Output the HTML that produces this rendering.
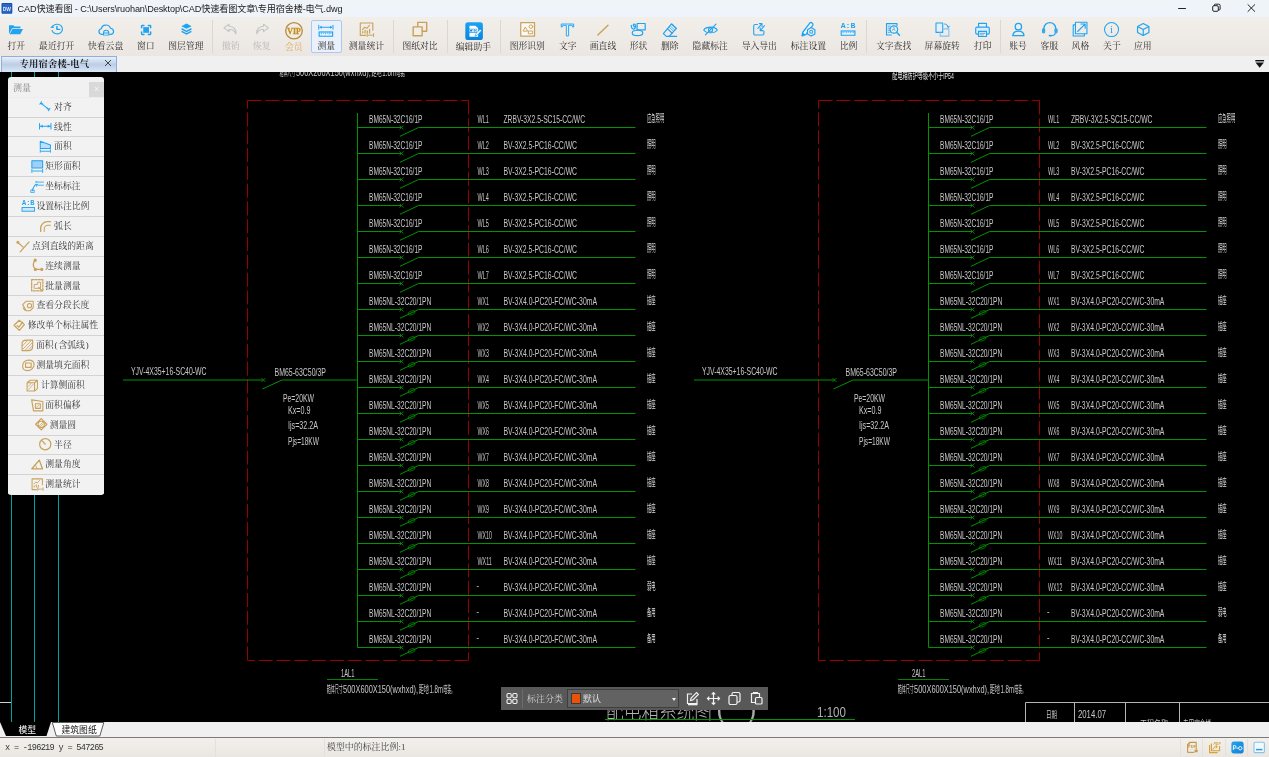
<!DOCTYPE html>
<html lang="zh-CN">
<head>
<meta charset="utf-8">
<title>CAD快速看图</title>
<style>
html,body{margin:0;padding:0;}
#root{position:absolute;left:0;top:0;width:1269px;height:757px;will-change:transform;}
body{width:1269px;height:757px;overflow:hidden;position:relative;background:linear-gradient(#f0f0f0,#f0f0f1);font-family:"Liberation Serif","Noto Serif CJK SC",serif;}
#title{position:absolute;left:0;top:0;width:1269px;height:17px;background:linear-gradient(#eff4f9,#eff4fa);}
#title .app{position:absolute;left:1px;top:3px;width:11.800px;height:10.800px;}
#title .tt{position:absolute;left:17.500px;top:0.700px;height:17px;line-height:17px;font-family:"Liberation Sans","Noto Sans CJK SC",sans-serif;font-size:9.15px;color:#1c1c1c;white-space:nowrap;letter-spacing:-0.12px;}
#title svg.wc{position:absolute;top:0;left:1170px;}
#toolbar{position:absolute;left:0;top:17px;width:1269px;height:39px;background:linear-gradient(#f2efeb,#ebe6e1);}
.lb{position:absolute;width:80px;top:23.600px;text-align:center;font-size:8.800px;line-height:11px;color:#2e2e2e;white-space:nowrap;}
.lb.dis{color:#b9b9b9;}
.lb.vip{color:#d9ad5a;top:24.800px;}
.lb.low{top:24.800px;}
.sep{position:absolute;top:3px;height:33px;width:1px;background:linear-gradient(#dcd7d1,#dcd7d2);}
.selbox{position:absolute;top:3px;width:28.6px;height:31px;border:1px solid #a9c9f2;background:linear-gradient(#eaf1fb,#eaf1fc);border-radius:2px;}
#tabs{position:absolute;left:0;top:56px;width:1269px;height:16px;background:linear-gradient(#f0f0f0,#f0f0f1);}
#tab1{position:absolute;left:1px;top:0;width:115.500px;height:16px;border:1px solid #8fb0dc;border-bottom:none;box-sizing:border-box;background:linear-gradient(#e9f0f9 0%,#bccfe8 48%,#c2d3eb 62%,#dbe6f4 100%);}
#tab1 span{position:absolute;left:17.500px;top:1.5px;font-size:9.3px;line-height:11px;font-weight:bold;color:#222;white-space:nowrap;letter-spacing:0.2px;}
#tab1 svg{position:absolute;left:102px;top:2.400px;}
#tabdd{position:absolute;left:1253px;top:59px;}
#panel{position:absolute;left:7.500px;top:77px;width:96.700px;height:418px;background:linear-gradient(#f1f1f1,#f1f1f2);border-radius:3px;overflow:hidden;}
#panel .hd{position:absolute;left:5.500px;top:6px;font-size:9px;line-height:11px;color:#8a8a8a;}
#panel .cl{position:absolute;left:81.600px;top:5px;width:15.200px;height:14.600px;background:linear-gradient(#d9d9d9,#d9d9da);color:#f4f4f4;font-size:9px;line-height:15px;text-align:center;font-family:"Liberation Sans",sans-serif;}
.prow{position:absolute;left:0;width:96.700px;height:19.875px;box-sizing:border-box;border-top:1px solid #d3d3d3;background:linear-gradient(#f2f2f2,#f2f2f3);font-size:8.8px;line-height:19px;color:#383838;text-align:center;white-space:nowrap;padding-right:1.600px;}
.prow i{display:inline-block;width:0.550em;font-style:normal;text-align:center;}
.prow .pi{display:inline-block;width:14.500px;height:14.500px;vertical-align:-4.200px;margin-right:1.200px;line-height:0;}
.prow .pi svg{width:14.500px;height:14.500px;}
.prow.first{border-top-color:#ececec;}
#float{position:absolute;left:501px;top:687px;width:267px;height:23px;background:linear-gradient(#585858,#585859);}
#float .g{position:absolute;left:5px;top:5px;}
#float .s{position:absolute;left:21px;top:2px;width:1px;height:19px;background:linear-gradient(#6c6c6c,#6c6c6d);}
#float .t{position:absolute;left:26px;top:5.5px;font-size:9px;line-height:12px;color:#d2d2d2;white-space:nowrap;}
#float .dd{position:absolute;left:66px;top:2px;width:112px;height:19px;box-sizing:border-box;border:1px solid #3e3e3e;background:linear-gradient(#626262,#626263);}
#float .dd i{position:absolute;left:2.500px;top:3px;width:10.500px;height:10.500px;background:linear-gradient(#ea5208,#ea5209);border:0.700px solid #3a3a3a;box-sizing:border-box;}
#float .dd span{position:absolute;left:15px;top:2.5px;font-size:9px;line-height:12px;color:#f2f2f2;}
#float .dd b{position:absolute;left:103.500px;top:7.500px;width:0;height:0;border:2.800px solid transparent;border-top:3.600px solid #f4f4f4;}
#float svg.fi{position:absolute;top:4px;}
#btabs{position:absolute;left:0;top:722px;width:1269px;height:15px;background:linear-gradient(#f0f0f0,#f0f0f1);}
#status{position:absolute;left:0;top:737px;width:1269px;height:20px;background:linear-gradient(#f3f0ec,#eae6e2);border-top:1px solid #7a7a7a;box-sizing:border-box;}
#status .xy{position:absolute;left:5px;top:5.300px;font-family:"Liberation Mono",monospace;font-size:8.600px;line-height:11px;color:#333;white-space:pre;letter-spacing:-0.700px;}
#status .sc{position:absolute;left:327px;top:4.300px;font-size:8.900px;letter-spacing:0.050px;line-height:11px;color:#444;white-space:nowrap;}
#status .vs{position:absolute;top:1px;width:1px;height:18px;background:linear-gradient(#e4e0db,#e4e0dc);}
#status svg.si{position:absolute;top:2px;}
</style>
</head>
<body>
<div id="root">
<div id="title">
<svg class="app" viewBox="0 0 11 11"><rect width="11" height="11" rx="1" fill="#1d4fa3"/><rect x="1" y="1" width="9" height="9" fill="#2b67c4"/><text x="5.500" y="8" font-size="5" text-anchor="middle" fill="#dfe9fa" font-family='"Liberation Sans",sans-serif' font-weight="bold">DW</text></svg>
<div class="tt">CAD快速看图 - C:\Users\ruohan\Desktop\CAD快速看图文章\专用宿舍楼-电气.dwg</div>
<svg class="wc" width="99" height="17" viewBox="0 0 99 17"><g fill="none" stroke="#222" stroke-width="1"><path d="M8.200 8.500h7.700"/><rect x="42.700" y="5.700" width="5.600" height="5.600" rx="1.200"/><path d="M44.300 5.700V5.200a1 1 0 0 1 1-1h3.500a1.300 1.300 0 0 1 1.300 1.300v3.500a1 1 0 0 1-1 1h-.800"/><path d="M77.700 4.400l7.300 7.300M85 4.400l-7.300 7.300"/></g></svg>
</div>
<div id="toolbar">
<svg width="17.81" height="17.95" preserveAspectRatio="none" style="position:absolute;left:7.12px;top:2.79px" viewBox="0 0 18 18"><path d="M2 5.2h4.4l1.2 1.3h6v1.7H5.2L2 14z" fill="#20a4f2"/><path d="M5.6 9h10.6l-2.8 5.2H2.6z" fill="#20a4f2"/></svg>
<span class="lb " style="left:-23.7px">打开</span>
<svg width="17.86" height="16.03" preserveAspectRatio="none" style="position:absolute;left:47.77px;top:4.33px" viewBox="0 0 18 18"><g fill="none" stroke="#20a4f2" stroke-width="1.2" stroke-linecap="round" stroke-linejoin="round" ><path d="M4.6 6.2A5.4 5.4 0 1 1 4 10.6"/><path d="M9 6.2v3.3h2.8" stroke-width="1.5"/></g><path d="M2.2 7.6l2.6-2.8l1.2 3.2z" fill="#20a4f2"/></svg>
<span class="lb " style="left:16.7px">最近打开</span>
<svg width="18.29" height="16.98" preserveAspectRatio="none" style="position:absolute;left:96.73px;top:3.58px" viewBox="0 0 18 18"><g fill="none" stroke="#20a4f2" stroke-width="1.2" stroke-linecap="round" stroke-linejoin="round" ><path d="M5.600 14.200H4.600a3 3 0 0 1-.400-5.900a4.600 4.600 0 0 1 9-.600a3.300 3.300 0 0 1 .600 6.500H12.600"/><path d="M6.400 15v-2.600a2.600 2.600 0 0 1 5.200 0V15zM6.400 12.800h5.200" stroke-width="1"/></g></svg>
<span class="lb " style="left:65.6px">快看云盘</span>
<svg width="16.24" height="15.93" preserveAspectRatio="none" style="position:absolute;left:137.78px;top:4.63px" viewBox="0 0 18 18"><rect x="5.800" y="5.800" width="6.400" height="6.400" fill="#20a4f2"/><path d="M4 6.600V4.600a.600.600 0 0 1 .600-.600h2M11.400 4h2a.600.600 0 0 1 .600.600v2M14 11.400v2a.600.600 0 0 1-.600.600h-2M6.600 14h-2a.600.600 0 0 1-.600-.600v-2" fill="none" stroke="#20a4f2" stroke-width="1.700" stroke-linecap="round"/></svg>
<span class="lb " style="left:105.7px">窗口</span>
<svg width="17.02" height="17.72" preserveAspectRatio="none" style="position:absolute;left:177.69px;top:3.43px" viewBox="0 0 18 18"><path d="M9 3.6l5.4 2.7L9 9L3.6 6.3z" fill="#20a4f2"/><path d="M3.8 8.9L9 11.5l5.2-2.6M3.8 11.5L9 14.1l5.2-2.6" fill="none" stroke="#20a4f2" stroke-width="1.5"/></svg>
<span class="lb " style="left:145.9px">图层管理</span>
<i class="sep" style="left:212.0px"></i>
<svg width="18.82" height="16.72" preserveAspectRatio="none" style="position:absolute;left:221.35px;top:4.45px" viewBox="0 0 18 18"><g fill="none" stroke="#c4c4c4" stroke-width="1.1" stroke-linecap="round" stroke-linejoin="round" ><path d="M7.6 3.4L2.8 7.4l4.8 4V9.2c3.4-.2 5.6 1 6.6 4.6c.6-5-2-8-6.6-8.2z"/></g></svg>
<span class="lb dis" style="left:190.7px">撤销</span>
<svg width="18.25" height="16.72" preserveAspectRatio="none" style="position:absolute;left:252.83px;top:4.45px" viewBox="0 0 18 18"><g fill="none" stroke="#c4c4c4" stroke-width="1.1" stroke-linecap="round" stroke-linejoin="round" ><path d="M10.4 3.4l4.8 4l-4.8 4V9.2c-3.4-.2-5.6 1-6.6 4.6c-.6-5 2-8 6.6-8.2z"/></g></svg>
<span class="lb dis" style="left:221.7px">恢复</span>
<svg width="20.00" height="19.50" preserveAspectRatio="none" style="position:absolute;left:284.00px;top:3.83px" viewBox="0 0 20 20"><circle cx="10" cy="10" r="8.300" fill="none" stroke="#b98a3a" stroke-width="1.300"/><text x="10" y="13.300" text-anchor="middle" font-family='"Liberation Serif", serif' font-weight="bold" font-size="9.400" fill="#c4901c" stroke="#c4901c" stroke-width=".300" textLength="13.400" lengthAdjust="spacingAndGlyphs">VIP</text></svg>
<span class="lb vip" style="left:253.8px">会员</span>
<i class="selbox" style="left:311.3px"></i>
<svg width="17.77" height="17.28" preserveAspectRatio="none" style="position:absolute;left:317.47px;top:5.02px" viewBox="0 0 18 18"><path d="M1.800 3v5M16.200 3v5M3 5.500h12" fill="none" stroke="#20a4f2" stroke-width="1"/><path d="M2.200 5.500l2.600-1.500v3zM15.800 5.500l-2.600-1.500v3z" fill="#20a4f2"/><rect x="2.200" y="10.400" width="13.600" height="4.400" fill="#f4faff" stroke="#20a4f2" stroke-width="1.200"/><path d="M4.400 11v2M6.400 11v1.400M8.400 11v2M10.400 11v1.400M12.400 11v2M14 11v1.400" stroke="#20a4f2" stroke-width="0.900"/></svg>
<span class="lb sel" style="left:286.3px">测量</span>
<svg width="17.11" height="16.65" preserveAspectRatio="none" style="position:absolute;left:357.54px;top:3.71px" viewBox="0 0 18 18"><g fill="none" stroke="#c9a25a" stroke-width="1.2" stroke-linecap="round" stroke-linejoin="round" ><path d="M15.6 10V2.2H2.4v13.4H8"/><path d="M4.8 9.4l2.4-2.8l2 1.4l3-3.4" /><path d="M5 13v-1.6M7.4 13v-2.8M9.8 13V10.6M12.2 13V9" stroke-width="1.3"/><path d="M9.6 13.6v3.4M16.4 13.6v3.4M10.4 15.3h5.2" stroke-width="1"/></g></svg>
<span class="lb " style="left:326.4px">测量统计</span>
<i class="sep" style="left:393.0px"></i>
<svg width="17.88" height="17.73" preserveAspectRatio="none" style="position:absolute;left:410.91px;top:3.40px" viewBox="0 0 18 18"><g fill="none" stroke="#c9a25a" stroke-width="1.4" stroke-linecap="round" stroke-linejoin="round" ><rect x="6.8" y="2.4" width="9" height="9"/><rect x="2.2" y="7" width="9" height="9" fill="#f1ede9"/></g></svg>
<span class="lb " style="left:380.0px">图纸对比</span>
<i class="sep" style="left:446.5px"></i>
<svg width="18.21" height="18.51" preserveAspectRatio="none" style="position:absolute;left:464.75px;top:4.54px" viewBox="0 0 18 18"><defs><linearGradient id="eg" x1="0" y1="0" x2="0" y2="1"><stop offset="0" stop-color="#1aa3f5"/><stop offset="1" stop-color="#0b84dc"/></linearGradient></defs><rect x="0.3" y="0.3" width="17.4" height="17.4" rx="2.6" fill="url(#eg)"/><path d="M4.4 3.6h6l2.6 2.4v8.4H4.4z" fill="#fff"/><rect x="4" y="6.6" width="8" height="3.8" fill="#0f8fe6"/><text x="8" y="9.9" font-size="3.6" font-family='"Liberation Sans", sans-serif' font-weight="bold" fill="#fff" text-anchor="middle">CAD</text><path d="M10 13.8l.6-2.2l4.4-4.6l1.4 1.4l-4.4 4.6z" fill="#fff" stroke="#0f8fe6" stroke-width="0.6"/></svg>
<span class="lb low" style="left:433.4px">编辑助手</span>
<i class="sep" style="left:500.0px"></i>
<svg width="17.26" height="16.91" preserveAspectRatio="none" style="position:absolute;left:518.62px;top:4.04px" viewBox="0 0 18 18"><g fill="none" stroke="#c9a25a" stroke-width="1.2" stroke-linecap="round" stroke-linejoin="round" ><rect x="1.800" y="1.800" width="14.400" height="14.400" stroke-width="1.300" fill="#fbfaf8"/><path d="M4.400 10.400l2.200-4l2.200 4z" stroke-width="1"/><circle cx="12.400" cy="6" r="1.900" stroke-width="1"/><rect x="10.200" y="10.600" width="4" height="3" stroke-width="1"/></g></svg>
<span class="lb " style="left:487.3px">图形识别</span>
<svg width="16.93" height="17.02" preserveAspectRatio="none" style="position:absolute;left:559.14px;top:3.52px" viewBox="0 0 18 18"><path d="M2.400 3.200h13.200v3.200h-1l-.600-1.800H10.200v11.200H7.800V4.600H4l-.600 1.800h-1z" fill="#e4f3fd" stroke="#20a4f2" stroke-width="1" stroke-linejoin="round"/></svg>
<span class="lb " style="left:527.7px">文字</span>
<svg width="16.06" height="15.95" preserveAspectRatio="none" style="position:absolute;left:595.18px;top:4.86px" viewBox="0 0 18 18"><path d="M3.2 14.6L14.6 3.6" stroke="#c9a25a" stroke-width="1.6" stroke-linecap="round"/></svg>
<span class="lb " style="left:563.0px">画直线</span>
<svg width="18.21" height="17.38" preserveAspectRatio="none" style="position:absolute;left:629.38px;top:4.07px" viewBox="0 0 18 18"><g fill="none" stroke="#20a4f2" stroke-width="1.2" stroke-linecap="round" stroke-linejoin="round" ><rect x="8" y="2.6" width="8" height="6.6"/><ellipse cx="8.4" cy="12.4" rx="5.2" ry="2.8"/><path d="M2.2 4.4c0 4 2.4 4.6 3.6 3.2c1.400-1.600.600-4.600-.8-4.4c-1.400.2-.6 3.400 1.600 3.200"/></g></svg>
<span class="lb " style="left:598.6px">形状</span>
<svg width="17.85" height="18.03" preserveAspectRatio="none" style="position:absolute;left:661.06px;top:3.87px" viewBox="0 0 18 18"><g fill="none" stroke="#20a4f2" stroke-width="1.2" stroke-linecap="round" stroke-linejoin="round" ><path d="M10.6 2.8l5 4.600l-7.400 8H5.400L2.400 12.600z"/><path d="M6.400 7.600l5 4.600M8.400 15.400h7.400"/><path d="M9.600 5.200l4.200 3.800M11 4l4 3.600M8.400 6.400l4.200 3.800" stroke-width="0.7"/></g></svg>
<span class="lb " style="left:629.8px">删除</span>
<svg width="17.03" height="16.78" preserveAspectRatio="none" style="position:absolute;left:701.74px;top:4.44px" viewBox="0 0 18 18"><g fill="none" stroke="#20a4f2" stroke-width="1.2" stroke-linecap="round" stroke-linejoin="round" ><path d="M1.800 9.600C4.400 5.600 13.600 5.600 16.200 9.600C13.600 13.600 4.400 13.600 1.800 9.600z"/><circle cx="9" cy="9.600" r="2.200"/><path d="M3.600 15L14.800 3.400"/></g></svg>
<span class="lb " style="left:670.2px">隐藏标注</span>
<svg width="15.29" height="15.78" preserveAspectRatio="none" style="position:absolute;left:751.18px;top:3.92px" viewBox="0 0 18 18"><g fill="none" stroke="#20a4f2" stroke-width="1.3" stroke-linecap="round" stroke-linejoin="round" ><path d="M7.600 4H4.800a1.600 1.600 0 0 0-1.600 1.600v8.800a1.600 1.600 0 0 0 1.600 1.600h8.800a1.600 1.600 0 0 0 1.600-1.600v-3"/><path d="M8 8.400l4.800-5.200M9.800 3h3.200v3.200M16 5.400l-5 5.400M14.200 11H10.800V7.600" stroke-width="1.200"/></g></svg>
<span class="lb " style="left:719.3px">导入导出</span>
<svg width="17.97" height="18.34" preserveAspectRatio="none" style="position:absolute;left:799.13px;top:3.09px" viewBox="0 0 18 18"><path d="M3 15.600l.800-3.600L10.800 3a1.900 1.900 0 0 1 3 2.200L6.800 14.400z" fill="#eef7fe" stroke="#20a4f2" stroke-width="1.300" stroke-linejoin="round"/><path d="M3 15.600l.800-3.400l2.800 2.200z" fill="#20a4f2"/><path d="M12.200 7.400l3.700 2.100v4.200l-3.700 2.100l-3.700-2.100V9.500z" fill="#f0ece8" stroke="#20a4f2" stroke-width="1.200" stroke-linejoin="round"/><circle cx="12.200" cy="11.600" r="1.500" fill="none" stroke="#20a4f2" stroke-width="1"/></svg>
<span class="lb " style="left:768.4px">标注设置</span>
<svg width="18.18" height="16.89" preserveAspectRatio="none" style="position:absolute;left:839.46px;top:4.42px" viewBox="0 0 18 18"><text x="9" y="7.400" text-anchor="middle" font-family='"Liberation Mono", monospace' font-weight="bold" font-size="7" fill="#20a4f2" textLength="14.600" lengthAdjust="spacingAndGlyphs">A:B</text><rect x="2.200" y="10.600" width="13.600" height="4.600" fill="#eaf5fe" stroke="#20a4f2" stroke-width="1.100"/><path d="M4 11v2M5.800 11v1.400M7.600 11v2M9.400 11v1.400M11.200 11v2M13 11v1.400M14.600 11v2" stroke="#20a4f2" stroke-width="0.800"/></svg>
<span class="lb " style="left:808.5px">比例</span>
<i class="sep" style="left:865.8px"></i>
<svg width="17.45" height="16.99" preserveAspectRatio="none" style="position:absolute;left:883.96px;top:3.89px" viewBox="0 0 18 18"><g fill="none" stroke="#20a4f2" stroke-width="1.2" stroke-linecap="round" stroke-linejoin="round" ><path d="M13.400 5V2.800H2.600v12h5"/><path d="M4.400 5.400h2M4.400 7.600h1.600M4.400 9.800h1.600M4.400 12h2" stroke-width="0.9"/><circle cx="10.200" cy="9" r="3.900"/><path d="M13 12l3 3.200" stroke-width="1.500"/></g><text x="10.200" y="11" font-size="5.400" text-anchor="middle" font-family='"Liberation Sans", sans-serif' fill="#20a4f2">A</text></svg>
<span class="lb " style="left:853.6px">文字查找</span>
<svg width="16.33" height="16.86" preserveAspectRatio="none" style="position:absolute;left:933.64px;top:4.20px" viewBox="0 0 18 18"><g fill="none" stroke="#20a4f2" stroke-width="1.2" stroke-linecap="round" stroke-linejoin="round" ><rect x="2.200" y="2.200" width="7.400" height="10" fill="#e3f1fc"/><path d="M6.800 12.400v3.800h9.600V8.400h-6.600" stroke="#7cc4f4"/><path d="M11.600 3.200c2.400.2 3.800 1.400 4.200 3.600M14.600 6l1.300 1l.9-1.500" stroke-width="1"/></g></svg>
<span class="lb " style="left:902.2px">屏幕旋转</span>
<svg width="17.03" height="17.88" preserveAspectRatio="none" style="position:absolute;left:973.94px;top:3.86px" viewBox="0 0 18 18"><g fill="none" stroke="#20a4f2" stroke-width="1.2" stroke-linecap="round" stroke-linejoin="round" ><path d="M4.800 6.200V2.400h8.400v3.800"/><rect x="1.800" y="6.200" width="14.400" height="7" rx="1.400" fill="#d9edfc"/><rect x="4.800" y="10.400" width="8.400" height="5.200" fill="#f0ece8"/><path d="M6.400 12.400h5.200M6.400 14h3.600" stroke-width="0.8"/></g></svg>
<span class="lb " style="left:942.7px">打印</span>
<i class="sep" style="left:999.8px"></i>
<svg width="16.80" height="16.88" preserveAspectRatio="none" style="position:absolute;left:1009.90px;top:3.54px" viewBox="0 0 18 18"><g fill="none" stroke="#20a4f2" stroke-width="1.4" stroke-linecap="round" stroke-linejoin="round" ><circle cx="9" cy="6" r="3.400"/><path d="M3 15.600c.300-3.400 2.800-4.800 6-4.800s5.700 1.400 6 4.800z"/></g></svg>
<span class="lb " style="left:978.0px">账号</span>
<svg width="19.61" height="18.98" preserveAspectRatio="none" style="position:absolute;left:1039.69px;top:2.10px" viewBox="0 0 18 18"><g fill="none" stroke="#20a4f2" stroke-width="1.2" stroke-linecap="round" stroke-linejoin="round" ><path d="M3.600 10V8.800a5.400 5.400 0 0 1 10.800 0V10"/><path d="M14 13.600c-.400 1.600-1.600 2.200-3.600 2.200" stroke-width="1"/></g><rect x="1.800" y="8.800" width="3" height="5" rx="1.400" fill="#35a8ee"/><rect x="13.200" y="8.800" width="3" height="5" rx="1.400" fill="#35a8ee"/><rect x="8" y="15" width="2.600" height="1.500" rx=".700" fill="#20a4f2"/></svg>
<span class="lb " style="left:1009.2px">客服</span>
<svg width="18.18" height="18.18" preserveAspectRatio="none" style="position:absolute;left:1071.46px;top:3.36px" viewBox="0 0 18 18"><g fill="none" stroke="#20a4f2" stroke-width="1.1" stroke-linecap="round" stroke-linejoin="round" ><path d="M4.400 4.800H2.200v11h11v-2.200"/><rect x="4.400" y="2.200" width="11.400" height="11.400"/><path d="M6.600 11.400l7-7M9.800 4h4.200v4.200" stroke-width="1.100"/></g></svg>
<span class="lb " style="left:1040.4px">风格</span>
<svg width="17.10" height="17.10" preserveAspectRatio="none" style="position:absolute;left:1103.05px;top:4.05px" viewBox="0 0 18 18"><g fill="none" stroke="#20a4f2" stroke-width="1.2" stroke-linecap="round" stroke-linejoin="round" ><circle cx="9" cy="9" r="7.400" stroke-width="1.100"/></g><text x="9" y="13" text-anchor="middle" font-family='"Liberation Serif", serif' font-size="11.500" fill="#20a4f2">i</text></svg>
<span class="lb " style="left:1071.9px">关于</span>
<svg width="16.49" height="15.09" preserveAspectRatio="none" style="position:absolute;left:1134.85px;top:4.76px" viewBox="0 0 18 18"><g fill="none" stroke="#20a4f2" stroke-width="1.3" stroke-linecap="round" stroke-linejoin="round" ><path d="M9 1.800l6.200 3.600v7.200L9 16.200l-6.200-3.600V5.400z"/><path d="M3.200 5.600L9 9l5.800-3.400M9 9v6.800"/></g></svg>
<span class="lb " style="left:1102.8px">应用</span>
</div>
<div id="tabs">
<div id="tab1"><span>专用宿舍楼-电气</span><svg width="8" height="8" viewBox="0 0 8 8"><path d="M1 1l6 6M7 1l-6 6" stroke="#444" stroke-width="1" fill="none"/></svg></div>
</div>
<svg id="tabdd" width="14" height="10" viewBox="0 0 14 10"><path d="M2.300 1.700h8.800" stroke="#111" stroke-width="1.400" fill="none"/><path d="M2.500 3.400h8.400L6.700 8.800z" fill="#111"/></svg>
<svg id="cad" width="1269" height="650" viewBox="0 72 1269 650" style="position:absolute;left:0;top:72px;background:linear-gradient(#000000,#000001)" shape-rendering="auto">
<line x1="11.5" y1="72" x2="11.5" y2="722" stroke="#00a0a0" stroke-width="1"/>
<line x1="34.5" y1="72" x2="34.5" y2="722" stroke="#00a0a0" stroke-width="1"/>
<line x1="58.5" y1="72" x2="58.5" y2="722" stroke="#00a0a0" stroke-width="1"/>
<line x1="0" y1="702.5" x2="11" y2="702.5" stroke="#cfcfcf" stroke-width="1"/>
<text x="279.5" y="75.6" font-size="10" fill="#c8c8c8" font-family='"Liberation Sans", "Noto Sans CJK SC", sans-serif' textLength="16.0" lengthAdjust="spacingAndGlyphs">箱体尺寸</text>
<text x="295.9" y="75.6" font-size="10.6" fill="#c8c8c8" font-family='"Liberation Sans", sans-serif' textLength="75.0" lengthAdjust="spacingAndGlyphs">500X200X150(wxhxd),</text>
<text x="371.5" y="75.6" font-size="10" fill="#c8c8c8" font-family='"Liberation Sans", "Noto Sans CJK SC", sans-serif' textLength="10.2" lengthAdjust="spacingAndGlyphs">距地</text>
<text x="382.3" y="75.6" font-size="10.6" fill="#c8c8c8" font-family='"Liberation Sans", sans-serif' textLength="13.6" lengthAdjust="spacingAndGlyphs">1.8m</text>
<text x="396.4" y="75.6" font-size="10" fill="#c8c8c8" font-family='"Liberation Sans", "Noto Sans CJK SC", sans-serif' textLength="11.2" lengthAdjust="spacingAndGlyphs">暗装。</text>
<text x="892.3" y="78.8" font-size="9.2" fill="#e4e4e4" font-family='"Liberation Sans", "Noto Sans CJK SC", sans-serif' textLength="61.5" lengthAdjust="spacingAndGlyphs">配电箱防护等级不小于IP54</text>
<path d="M247.5 100.5H468.5M468.5 100.5V660.5M468.5 660.5H247.5M247.5 660.5V100.5" fill="none" stroke="#980000" stroke-width="1" stroke-dasharray="14.1 3.7"/>
<line x1="357.5" y1="113" x2="357.5" y2="647.5" stroke="#009400" stroke-width="1"/>
<path d="M357.5 127.5H401.5M400.0 136.3L418.5 127.5H635.5" fill="none" stroke="#009400" stroke-width="1"/>
<path d="M399.5 125.5l4 4m0 -4l-4 4" stroke="#009400" stroke-width="0.8" fill="none"/>
<text x="369.0" y="122.5" font-size="10.6" fill="#c8c8c8" font-family='"Liberation Sans", sans-serif' textLength="53.5" lengthAdjust="spacingAndGlyphs">BM65N-32C16/1P</text>
<text x="477.5" y="122.5" font-size="10.6" fill="#c8c8c8" font-family='"Liberation Sans", sans-serif' textLength="11.3" lengthAdjust="spacingAndGlyphs">WL1</text>
<text x="503.5" y="122.5" font-size="10.6" fill="#c8c8c8" font-family='"Liberation Sans", sans-serif' textLength="81.5" lengthAdjust="spacingAndGlyphs">ZRBV-3X2.5-SC15-CC/WC</text>
<text x="647.0" y="122.0" font-size="10.2" fill="#dcdcdc" font-family='"Liberation Sans", "Noto Sans CJK SC", sans-serif' textLength="17.2" lengthAdjust="spacingAndGlyphs">应急照明</text>
<path d="M357.5 153.5H401.5M400.0 162.3L418.5 153.5H635.5" fill="none" stroke="#009400" stroke-width="1"/>
<path d="M399.5 151.5l4 4m0 -4l-4 4" stroke="#009400" stroke-width="0.8" fill="none"/>
<text x="369.0" y="148.5" font-size="10.6" fill="#c8c8c8" font-family='"Liberation Sans", sans-serif' textLength="53.5" lengthAdjust="spacingAndGlyphs">BM65N-32C16/1P</text>
<text x="477.5" y="148.5" font-size="10.6" fill="#c8c8c8" font-family='"Liberation Sans", sans-serif' textLength="11.3" lengthAdjust="spacingAndGlyphs">WL2</text>
<text x="503.5" y="148.5" font-size="10.6" fill="#c8c8c8" font-family='"Liberation Sans", sans-serif' textLength="73.5" lengthAdjust="spacingAndGlyphs">BV-3X2.5-PC16-CC/WC</text>
<text x="647.0" y="148.0" font-size="10.2" fill="#dcdcdc" font-family='"Liberation Sans", "Noto Sans CJK SC", sans-serif' textLength="8.6" lengthAdjust="spacingAndGlyphs">照明</text>
<path d="M357.5 179.5H401.5M400.0 188.3L418.5 179.5H635.5" fill="none" stroke="#009400" stroke-width="1"/>
<path d="M399.5 177.5l4 4m0 -4l-4 4" stroke="#009400" stroke-width="0.8" fill="none"/>
<text x="369.0" y="174.5" font-size="10.6" fill="#c8c8c8" font-family='"Liberation Sans", sans-serif' textLength="53.5" lengthAdjust="spacingAndGlyphs">BM65N-32C16/1P</text>
<text x="477.5" y="174.5" font-size="10.6" fill="#c8c8c8" font-family='"Liberation Sans", sans-serif' textLength="11.3" lengthAdjust="spacingAndGlyphs">WL3</text>
<text x="503.5" y="174.5" font-size="10.6" fill="#c8c8c8" font-family='"Liberation Sans", sans-serif' textLength="73.5" lengthAdjust="spacingAndGlyphs">BV-3X2.5-PC16-CC/WC</text>
<text x="647.0" y="174.0" font-size="10.2" fill="#dcdcdc" font-family='"Liberation Sans", "Noto Sans CJK SC", sans-serif' textLength="8.6" lengthAdjust="spacingAndGlyphs">照明</text>
<path d="M357.5 205.5H401.5M400.0 214.3L418.5 205.5H635.5" fill="none" stroke="#009400" stroke-width="1"/>
<path d="M399.5 203.5l4 4m0 -4l-4 4" stroke="#009400" stroke-width="0.8" fill="none"/>
<text x="369.0" y="200.5" font-size="10.6" fill="#c8c8c8" font-family='"Liberation Sans", sans-serif' textLength="53.5" lengthAdjust="spacingAndGlyphs">BM65N-32C16/1P</text>
<text x="477.5" y="200.5" font-size="10.6" fill="#c8c8c8" font-family='"Liberation Sans", sans-serif' textLength="11.3" lengthAdjust="spacingAndGlyphs">WL4</text>
<text x="503.5" y="200.5" font-size="10.6" fill="#c8c8c8" font-family='"Liberation Sans", sans-serif' textLength="73.5" lengthAdjust="spacingAndGlyphs">BV-3X2.5-PC16-CC/WC</text>
<text x="647.0" y="200.0" font-size="10.2" fill="#dcdcdc" font-family='"Liberation Sans", "Noto Sans CJK SC", sans-serif' textLength="8.6" lengthAdjust="spacingAndGlyphs">照明</text>
<path d="M357.5 231.5H401.5M400.0 240.3L418.5 231.5H635.5" fill="none" stroke="#009400" stroke-width="1"/>
<path d="M399.5 229.5l4 4m0 -4l-4 4" stroke="#009400" stroke-width="0.8" fill="none"/>
<text x="369.0" y="226.5" font-size="10.6" fill="#c8c8c8" font-family='"Liberation Sans", sans-serif' textLength="53.5" lengthAdjust="spacingAndGlyphs">BM65N-32C16/1P</text>
<text x="477.5" y="226.5" font-size="10.6" fill="#c8c8c8" font-family='"Liberation Sans", sans-serif' textLength="11.3" lengthAdjust="spacingAndGlyphs">WL5</text>
<text x="503.5" y="226.5" font-size="10.6" fill="#c8c8c8" font-family='"Liberation Sans", sans-serif' textLength="73.5" lengthAdjust="spacingAndGlyphs">BV-3X2.5-PC16-CC/WC</text>
<text x="647.0" y="226.0" font-size="10.2" fill="#dcdcdc" font-family='"Liberation Sans", "Noto Sans CJK SC", sans-serif' textLength="8.6" lengthAdjust="spacingAndGlyphs">照明</text>
<path d="M357.5 257.5H401.5M400.0 266.3L418.5 257.5H635.5" fill="none" stroke="#009400" stroke-width="1"/>
<path d="M399.5 255.5l4 4m0 -4l-4 4" stroke="#009400" stroke-width="0.8" fill="none"/>
<text x="369.0" y="252.5" font-size="10.6" fill="#c8c8c8" font-family='"Liberation Sans", sans-serif' textLength="53.5" lengthAdjust="spacingAndGlyphs">BM65N-32C16/1P</text>
<text x="477.5" y="252.5" font-size="10.6" fill="#c8c8c8" font-family='"Liberation Sans", sans-serif' textLength="11.3" lengthAdjust="spacingAndGlyphs">WL6</text>
<text x="503.5" y="252.5" font-size="10.6" fill="#c8c8c8" font-family='"Liberation Sans", sans-serif' textLength="73.5" lengthAdjust="spacingAndGlyphs">BV-3X2.5-PC16-CC/WC</text>
<text x="647.0" y="252.0" font-size="10.2" fill="#dcdcdc" font-family='"Liberation Sans", "Noto Sans CJK SC", sans-serif' textLength="8.6" lengthAdjust="spacingAndGlyphs">照明</text>
<path d="M357.5 283.5H401.5M400.0 292.3L418.5 283.5H635.5" fill="none" stroke="#009400" stroke-width="1"/>
<path d="M399.5 281.5l4 4m0 -4l-4 4" stroke="#009400" stroke-width="0.8" fill="none"/>
<text x="369.0" y="278.5" font-size="10.6" fill="#c8c8c8" font-family='"Liberation Sans", sans-serif' textLength="53.5" lengthAdjust="spacingAndGlyphs">BM65N-32C16/1P</text>
<text x="477.5" y="278.5" font-size="10.6" fill="#c8c8c8" font-family='"Liberation Sans", sans-serif' textLength="11.3" lengthAdjust="spacingAndGlyphs">WL7</text>
<text x="503.5" y="278.5" font-size="10.6" fill="#c8c8c8" font-family='"Liberation Sans", sans-serif' textLength="73.5" lengthAdjust="spacingAndGlyphs">BV-3X2.5-PC16-CC/WC</text>
<text x="647.0" y="278.0" font-size="10.2" fill="#dcdcdc" font-family='"Liberation Sans", "Noto Sans CJK SC", sans-serif' textLength="8.6" lengthAdjust="spacingAndGlyphs">照明</text>
<path d="M357.5 309.5H401.5M400.0 318.3L418.5 309.5H635.5" fill="none" stroke="#009400" stroke-width="1"/>
<path d="M399.5 307.5l4 4m0 -4l-4 4" stroke="#009400" stroke-width="0.8" fill="none"/>
<ellipse cx="411.6" cy="312.8" rx="3.6" ry="1.9" fill="none" stroke="#009400" stroke-width="0.65" transform="rotate(-22 411.6 312.8)"/>
<text x="369.0" y="304.5" font-size="10.6" fill="#c8c8c8" font-family='"Liberation Sans", sans-serif' textLength="62.3" lengthAdjust="spacingAndGlyphs">BM65NL-32C20/1PN</text>
<text x="477.5" y="304.5" font-size="10.6" fill="#c8c8c8" font-family='"Liberation Sans", sans-serif' textLength="11.3" lengthAdjust="spacingAndGlyphs">WX1</text>
<text x="503.5" y="304.5" font-size="10.6" fill="#c8c8c8" font-family='"Liberation Sans", sans-serif' textLength="93.5" lengthAdjust="spacingAndGlyphs">BV-3X4.0-PC20-FC/WC-30mA</text>
<text x="647.0" y="304.0" font-size="10.2" fill="#dcdcdc" font-family='"Liberation Sans", "Noto Sans CJK SC", sans-serif' textLength="8.6" lengthAdjust="spacingAndGlyphs">插座</text>
<path d="M357.5 335.5H401.5M400.0 344.3L418.5 335.5H635.5" fill="none" stroke="#009400" stroke-width="1"/>
<path d="M399.5 333.5l4 4m0 -4l-4 4" stroke="#009400" stroke-width="0.8" fill="none"/>
<ellipse cx="411.6" cy="338.8" rx="3.6" ry="1.9" fill="none" stroke="#009400" stroke-width="0.65" transform="rotate(-22 411.6 338.8)"/>
<text x="369.0" y="330.5" font-size="10.6" fill="#c8c8c8" font-family='"Liberation Sans", sans-serif' textLength="62.3" lengthAdjust="spacingAndGlyphs">BM65NL-32C20/1PN</text>
<text x="477.5" y="330.5" font-size="10.6" fill="#c8c8c8" font-family='"Liberation Sans", sans-serif' textLength="11.3" lengthAdjust="spacingAndGlyphs">WX2</text>
<text x="503.5" y="330.5" font-size="10.6" fill="#c8c8c8" font-family='"Liberation Sans", sans-serif' textLength="93.5" lengthAdjust="spacingAndGlyphs">BV-3X4.0-PC20-FC/WC-30mA</text>
<text x="647.0" y="330.0" font-size="10.2" fill="#dcdcdc" font-family='"Liberation Sans", "Noto Sans CJK SC", sans-serif' textLength="8.6" lengthAdjust="spacingAndGlyphs">插座</text>
<path d="M357.5 361.5H401.5M400.0 370.3L418.5 361.5H635.5" fill="none" stroke="#009400" stroke-width="1"/>
<path d="M399.5 359.5l4 4m0 -4l-4 4" stroke="#009400" stroke-width="0.8" fill="none"/>
<ellipse cx="411.6" cy="364.8" rx="3.6" ry="1.9" fill="none" stroke="#009400" stroke-width="0.65" transform="rotate(-22 411.6 364.8)"/>
<text x="369.0" y="356.5" font-size="10.6" fill="#c8c8c8" font-family='"Liberation Sans", sans-serif' textLength="62.3" lengthAdjust="spacingAndGlyphs">BM65NL-32C20/1PN</text>
<text x="477.5" y="356.5" font-size="10.6" fill="#c8c8c8" font-family='"Liberation Sans", sans-serif' textLength="11.3" lengthAdjust="spacingAndGlyphs">WX3</text>
<text x="503.5" y="356.5" font-size="10.6" fill="#c8c8c8" font-family='"Liberation Sans", sans-serif' textLength="93.5" lengthAdjust="spacingAndGlyphs">BV-3X4.0-PC20-FC/WC-30mA</text>
<text x="647.0" y="356.0" font-size="10.2" fill="#dcdcdc" font-family='"Liberation Sans", "Noto Sans CJK SC", sans-serif' textLength="8.6" lengthAdjust="spacingAndGlyphs">插座</text>
<path d="M357.5 387.5H401.5M400.0 396.3L418.5 387.5H635.5" fill="none" stroke="#009400" stroke-width="1"/>
<path d="M399.5 385.5l4 4m0 -4l-4 4" stroke="#009400" stroke-width="0.8" fill="none"/>
<ellipse cx="411.6" cy="390.8" rx="3.6" ry="1.9" fill="none" stroke="#009400" stroke-width="0.65" transform="rotate(-22 411.6 390.8)"/>
<text x="369.0" y="382.5" font-size="10.6" fill="#c8c8c8" font-family='"Liberation Sans", sans-serif' textLength="62.3" lengthAdjust="spacingAndGlyphs">BM65NL-32C20/1PN</text>
<text x="477.5" y="382.5" font-size="10.6" fill="#c8c8c8" font-family='"Liberation Sans", sans-serif' textLength="11.3" lengthAdjust="spacingAndGlyphs">WX4</text>
<text x="503.5" y="382.5" font-size="10.6" fill="#c8c8c8" font-family='"Liberation Sans", sans-serif' textLength="93.5" lengthAdjust="spacingAndGlyphs">BV-3X4.0-PC20-FC/WC-30mA</text>
<text x="647.0" y="382.0" font-size="10.2" fill="#dcdcdc" font-family='"Liberation Sans", "Noto Sans CJK SC", sans-serif' textLength="8.6" lengthAdjust="spacingAndGlyphs">插座</text>
<path d="M357.5 413.5H401.5M400.0 422.3L418.5 413.5H635.5" fill="none" stroke="#009400" stroke-width="1"/>
<path d="M399.5 411.5l4 4m0 -4l-4 4" stroke="#009400" stroke-width="0.8" fill="none"/>
<ellipse cx="411.6" cy="416.8" rx="3.6" ry="1.9" fill="none" stroke="#009400" stroke-width="0.65" transform="rotate(-22 411.6 416.8)"/>
<text x="369.0" y="408.5" font-size="10.6" fill="#c8c8c8" font-family='"Liberation Sans", sans-serif' textLength="62.3" lengthAdjust="spacingAndGlyphs">BM65NL-32C20/1PN</text>
<text x="477.5" y="408.5" font-size="10.6" fill="#c8c8c8" font-family='"Liberation Sans", sans-serif' textLength="11.3" lengthAdjust="spacingAndGlyphs">WX5</text>
<text x="503.5" y="408.5" font-size="10.6" fill="#c8c8c8" font-family='"Liberation Sans", sans-serif' textLength="93.5" lengthAdjust="spacingAndGlyphs">BV-3X4.0-PC20-FC/WC-30mA</text>
<text x="647.0" y="408.0" font-size="10.2" fill="#dcdcdc" font-family='"Liberation Sans", "Noto Sans CJK SC", sans-serif' textLength="8.6" lengthAdjust="spacingAndGlyphs">插座</text>
<path d="M357.5 439.5H401.5M400.0 448.3L418.5 439.5H635.5" fill="none" stroke="#009400" stroke-width="1"/>
<path d="M399.5 437.5l4 4m0 -4l-4 4" stroke="#009400" stroke-width="0.8" fill="none"/>
<ellipse cx="411.6" cy="442.8" rx="3.6" ry="1.9" fill="none" stroke="#009400" stroke-width="0.65" transform="rotate(-22 411.6 442.8)"/>
<text x="369.0" y="434.5" font-size="10.6" fill="#c8c8c8" font-family='"Liberation Sans", sans-serif' textLength="62.3" lengthAdjust="spacingAndGlyphs">BM65NL-32C20/1PN</text>
<text x="477.5" y="434.5" font-size="10.6" fill="#c8c8c8" font-family='"Liberation Sans", sans-serif' textLength="11.3" lengthAdjust="spacingAndGlyphs">WX6</text>
<text x="503.5" y="434.5" font-size="10.6" fill="#c8c8c8" font-family='"Liberation Sans", sans-serif' textLength="93.5" lengthAdjust="spacingAndGlyphs">BV-3X4.0-PC20-FC/WC-30mA</text>
<text x="647.0" y="434.0" font-size="10.2" fill="#dcdcdc" font-family='"Liberation Sans", "Noto Sans CJK SC", sans-serif' textLength="8.6" lengthAdjust="spacingAndGlyphs">插座</text>
<path d="M357.5 465.5H401.5M400.0 474.3L418.5 465.5H635.5" fill="none" stroke="#009400" stroke-width="1"/>
<path d="M399.5 463.5l4 4m0 -4l-4 4" stroke="#009400" stroke-width="0.8" fill="none"/>
<ellipse cx="411.6" cy="468.8" rx="3.6" ry="1.9" fill="none" stroke="#009400" stroke-width="0.65" transform="rotate(-22 411.6 468.8)"/>
<text x="369.0" y="460.5" font-size="10.6" fill="#c8c8c8" font-family='"Liberation Sans", sans-serif' textLength="62.3" lengthAdjust="spacingAndGlyphs">BM65NL-32C20/1PN</text>
<text x="477.5" y="460.5" font-size="10.6" fill="#c8c8c8" font-family='"Liberation Sans", sans-serif' textLength="11.3" lengthAdjust="spacingAndGlyphs">WX7</text>
<text x="503.5" y="460.5" font-size="10.6" fill="#c8c8c8" font-family='"Liberation Sans", sans-serif' textLength="93.5" lengthAdjust="spacingAndGlyphs">BV-3X4.0-PC20-FC/WC-30mA</text>
<text x="647.0" y="460.0" font-size="10.2" fill="#dcdcdc" font-family='"Liberation Sans", "Noto Sans CJK SC", sans-serif' textLength="8.6" lengthAdjust="spacingAndGlyphs">插座</text>
<path d="M357.5 491.5H401.5M400.0 500.3L418.5 491.5H635.5" fill="none" stroke="#009400" stroke-width="1"/>
<path d="M399.5 489.5l4 4m0 -4l-4 4" stroke="#009400" stroke-width="0.8" fill="none"/>
<ellipse cx="411.6" cy="494.8" rx="3.6" ry="1.9" fill="none" stroke="#009400" stroke-width="0.65" transform="rotate(-22 411.6 494.8)"/>
<text x="369.0" y="486.5" font-size="10.6" fill="#c8c8c8" font-family='"Liberation Sans", sans-serif' textLength="62.3" lengthAdjust="spacingAndGlyphs">BM65NL-32C20/1PN</text>
<text x="477.5" y="486.5" font-size="10.6" fill="#c8c8c8" font-family='"Liberation Sans", sans-serif' textLength="11.3" lengthAdjust="spacingAndGlyphs">WX8</text>
<text x="503.5" y="486.5" font-size="10.6" fill="#c8c8c8" font-family='"Liberation Sans", sans-serif' textLength="93.5" lengthAdjust="spacingAndGlyphs">BV-3X4.0-PC20-FC/WC-30mA</text>
<text x="647.0" y="486.0" font-size="10.2" fill="#dcdcdc" font-family='"Liberation Sans", "Noto Sans CJK SC", sans-serif' textLength="8.6" lengthAdjust="spacingAndGlyphs">插座</text>
<path d="M357.5 517.5H401.5M400.0 526.3L418.5 517.5H635.5" fill="none" stroke="#009400" stroke-width="1"/>
<path d="M399.5 515.5l4 4m0 -4l-4 4" stroke="#009400" stroke-width="0.8" fill="none"/>
<ellipse cx="411.6" cy="520.8" rx="3.6" ry="1.9" fill="none" stroke="#009400" stroke-width="0.65" transform="rotate(-22 411.6 520.8)"/>
<text x="369.0" y="512.5" font-size="10.6" fill="#c8c8c8" font-family='"Liberation Sans", sans-serif' textLength="62.3" lengthAdjust="spacingAndGlyphs">BM65NL-32C20/1PN</text>
<text x="477.5" y="512.5" font-size="10.6" fill="#c8c8c8" font-family='"Liberation Sans", sans-serif' textLength="11.3" lengthAdjust="spacingAndGlyphs">WX9</text>
<text x="503.5" y="512.5" font-size="10.6" fill="#c8c8c8" font-family='"Liberation Sans", sans-serif' textLength="93.5" lengthAdjust="spacingAndGlyphs">BV-3X4.0-PC20-FC/WC-30mA</text>
<text x="647.0" y="512.0" font-size="10.2" fill="#dcdcdc" font-family='"Liberation Sans", "Noto Sans CJK SC", sans-serif' textLength="8.6" lengthAdjust="spacingAndGlyphs">插座</text>
<path d="M357.5 543.5H401.5M400.0 552.3L418.5 543.5H635.5" fill="none" stroke="#009400" stroke-width="1"/>
<path d="M399.5 541.5l4 4m0 -4l-4 4" stroke="#009400" stroke-width="0.8" fill="none"/>
<ellipse cx="411.6" cy="546.8" rx="3.6" ry="1.9" fill="none" stroke="#009400" stroke-width="0.65" transform="rotate(-22 411.6 546.8)"/>
<text x="369.0" y="538.5" font-size="10.6" fill="#c8c8c8" font-family='"Liberation Sans", sans-serif' textLength="62.3" lengthAdjust="spacingAndGlyphs">BM65NL-32C20/1PN</text>
<text x="477.5" y="538.5" font-size="10.6" fill="#c8c8c8" font-family='"Liberation Sans", sans-serif' textLength="14.3" lengthAdjust="spacingAndGlyphs">WX10</text>
<text x="503.5" y="538.5" font-size="10.6" fill="#c8c8c8" font-family='"Liberation Sans", sans-serif' textLength="93.5" lengthAdjust="spacingAndGlyphs">BV-3X4.0-PC20-FC/WC-30mA</text>
<text x="647.0" y="538.0" font-size="10.2" fill="#dcdcdc" font-family='"Liberation Sans", "Noto Sans CJK SC", sans-serif' textLength="8.6" lengthAdjust="spacingAndGlyphs">插座</text>
<path d="M357.5 569.5H401.5M400.0 578.3L418.5 569.5H635.5" fill="none" stroke="#009400" stroke-width="1"/>
<path d="M399.5 567.5l4 4m0 -4l-4 4" stroke="#009400" stroke-width="0.8" fill="none"/>
<ellipse cx="411.6" cy="572.8" rx="3.6" ry="1.9" fill="none" stroke="#009400" stroke-width="0.65" transform="rotate(-22 411.6 572.8)"/>
<text x="369.0" y="564.5" font-size="10.6" fill="#c8c8c8" font-family='"Liberation Sans", sans-serif' textLength="62.3" lengthAdjust="spacingAndGlyphs">BM65NL-32C20/1PN</text>
<text x="477.5" y="564.5" font-size="10.6" fill="#c8c8c8" font-family='"Liberation Sans", sans-serif' textLength="14.3" lengthAdjust="spacingAndGlyphs">WX11</text>
<text x="503.5" y="564.5" font-size="10.6" fill="#c8c8c8" font-family='"Liberation Sans", sans-serif' textLength="93.5" lengthAdjust="spacingAndGlyphs">BV-3X4.0-PC20-FC/WC-30mA</text>
<text x="647.0" y="564.0" font-size="10.2" fill="#dcdcdc" font-family='"Liberation Sans", "Noto Sans CJK SC", sans-serif' textLength="8.6" lengthAdjust="spacingAndGlyphs">插座</text>
<path d="M357.5 595.5H401.5M400.0 604.3L418.5 595.5H635.5" fill="none" stroke="#009400" stroke-width="1"/>
<path d="M399.5 593.5l4 4m0 -4l-4 4" stroke="#009400" stroke-width="0.8" fill="none"/>
<ellipse cx="411.6" cy="598.8" rx="3.6" ry="1.9" fill="none" stroke="#009400" stroke-width="0.65" transform="rotate(-22 411.6 598.8)"/>
<text x="369.0" y="590.5" font-size="10.6" fill="#c8c8c8" font-family='"Liberation Sans", sans-serif' textLength="62.3" lengthAdjust="spacingAndGlyphs">BM65NL-32C20/1PN</text>
<text x="476.5" y="589.3" font-size="10.6" fill="#c8c8c8" font-family='"Liberation Sans", sans-serif' textLength="2.5" lengthAdjust="spacingAndGlyphs">-</text>
<text x="503.5" y="590.5" font-size="10.6" fill="#c8c8c8" font-family='"Liberation Sans", sans-serif' textLength="93.5" lengthAdjust="spacingAndGlyphs">BV-3X4.0-PC20-FC/WC-30mA</text>
<text x="647.0" y="590.0" font-size="10.2" fill="#dcdcdc" font-family='"Liberation Sans", "Noto Sans CJK SC", sans-serif' textLength="8.6" lengthAdjust="spacingAndGlyphs">弱电</text>
<path d="M357.5 621.5H401.5M400.0 630.3L418.5 621.5H635.5" fill="none" stroke="#009400" stroke-width="1"/>
<path d="M399.5 619.5l4 4m0 -4l-4 4" stroke="#009400" stroke-width="0.8" fill="none"/>
<ellipse cx="411.6" cy="624.8" rx="3.6" ry="1.9" fill="none" stroke="#009400" stroke-width="0.65" transform="rotate(-22 411.6 624.8)"/>
<text x="369.0" y="616.5" font-size="10.6" fill="#c8c8c8" font-family='"Liberation Sans", sans-serif' textLength="62.3" lengthAdjust="spacingAndGlyphs">BM65NL-32C20/1PN</text>
<text x="476.5" y="615.3" font-size="10.6" fill="#c8c8c8" font-family='"Liberation Sans", sans-serif' textLength="2.5" lengthAdjust="spacingAndGlyphs">-</text>
<text x="503.5" y="616.5" font-size="10.6" fill="#c8c8c8" font-family='"Liberation Sans", sans-serif' textLength="93.5" lengthAdjust="spacingAndGlyphs">BV-3X4.0-PC20-FC/WC-30mA</text>
<text x="647.0" y="616.0" font-size="10.2" fill="#dcdcdc" font-family='"Liberation Sans", "Noto Sans CJK SC", sans-serif' textLength="8.6" lengthAdjust="spacingAndGlyphs">备用</text>
<path d="M357.5 647.5H401.5M400.0 656.3L418.5 647.5H635.5" fill="none" stroke="#009400" stroke-width="1"/>
<path d="M399.5 645.5l4 4m0 -4l-4 4" stroke="#009400" stroke-width="0.8" fill="none"/>
<ellipse cx="411.6" cy="650.8" rx="3.6" ry="1.9" fill="none" stroke="#009400" stroke-width="0.65" transform="rotate(-22 411.6 650.8)"/>
<text x="369.0" y="642.5" font-size="10.6" fill="#c8c8c8" font-family='"Liberation Sans", sans-serif' textLength="62.3" lengthAdjust="spacingAndGlyphs">BM65NL-32C20/1PN</text>
<text x="476.5" y="641.3" font-size="10.6" fill="#c8c8c8" font-family='"Liberation Sans", sans-serif' textLength="2.5" lengthAdjust="spacingAndGlyphs">-</text>
<text x="503.5" y="642.5" font-size="10.6" fill="#c8c8c8" font-family='"Liberation Sans", sans-serif' textLength="93.5" lengthAdjust="spacingAndGlyphs">BV-3X4.0-PC20-FC/WC-30mA</text>
<text x="647.0" y="642.0" font-size="10.2" fill="#dcdcdc" font-family='"Liberation Sans", "Noto Sans CJK SC", sans-serif' textLength="8.6" lengthAdjust="spacingAndGlyphs">备用</text>
<text x="131.0" y="375.2" font-size="10.6" fill="#c8c8c8" font-family='"Liberation Sans", sans-serif' textLength="75.5" lengthAdjust="spacingAndGlyphs">YJV-4X35+16-SC40-WC</text>
<path d="M123.0 380H263.5M262.5 389L282.0 380H357.5" fill="none" stroke="#009400" stroke-width="1"/>
<path d="M261.5 378l4 4m0 -4l-4 4" stroke="#009400" stroke-width="0.8" fill="none"/>
<text x="274.5" y="375.8" font-size="10.6" fill="#c8c8c8" font-family='"Liberation Sans", sans-serif' textLength="51.5" lengthAdjust="spacingAndGlyphs">BM65-63C50/3P</text>
<text x="283.0" y="402.0" font-size="10.3" fill="#c8c8c8" font-family='"Liberation Sans", sans-serif' textLength="31.0" lengthAdjust="spacingAndGlyphs">Pe=20KW</text>
<text x="288.0" y="413.5" font-size="10.3" fill="#c8c8c8" font-family='"Liberation Sans", sans-serif' textLength="22.5" lengthAdjust="spacingAndGlyphs">Kx=0.9</text>
<text x="288.0" y="429.0" font-size="10.3" fill="#c8c8c8" font-family='"Liberation Sans", sans-serif' textLength="30.0" lengthAdjust="spacingAndGlyphs">Ijs=32.2A</text>
<text x="288.0" y="444.5" font-size="10.3" fill="#c8c8c8" font-family='"Liberation Sans", sans-serif' textLength="31.0" lengthAdjust="spacingAndGlyphs">Pjs=18KW</text>
<text x="341.0" y="677.3" font-size="10.6" fill="#c8c8c8" font-family='"Liberation Sans", sans-serif' textLength="13.5" lengthAdjust="spacingAndGlyphs">1AL1</text>
<line x1="327.0" y1="679.5" x2="378.0" y2="679.5" stroke="#008600" stroke-width="1"/>
<text x="326.7" y="693.3" font-size="10" fill="#c8c8c8" font-family='"Liberation Sans", "Noto Sans CJK SC", sans-serif' textLength="16.0" lengthAdjust="spacingAndGlyphs">箱体尺寸</text>
<text x="343.1" y="693.3" font-size="10.6" fill="#c8c8c8" font-family='"Liberation Sans", sans-serif' textLength="75.0" lengthAdjust="spacingAndGlyphs">500X600X150(wxhxd),</text>
<text x="418.7" y="693.3" font-size="10" fill="#c8c8c8" font-family='"Liberation Sans", "Noto Sans CJK SC", sans-serif' textLength="10.2" lengthAdjust="spacingAndGlyphs">距地</text>
<text x="429.5" y="693.3" font-size="10.6" fill="#c8c8c8" font-family='"Liberation Sans", sans-serif' textLength="13.6" lengthAdjust="spacingAndGlyphs">1.8m</text>
<text x="443.6" y="693.3" font-size="10" fill="#c8c8c8" font-family='"Liberation Sans", "Noto Sans CJK SC", sans-serif' textLength="11.2" lengthAdjust="spacingAndGlyphs">暗装。</text>
<path d="M818.5 100.5H1039.5M1039.5 100.5V660.5M1039.5 660.5H818.5M818.5 660.5V100.5" fill="none" stroke="#980000" stroke-width="1" stroke-dasharray="14.1 3.7"/>
<line x1="928.5" y1="113" x2="928.5" y2="647.5" stroke="#009400" stroke-width="1"/>
<path d="M928.5 127.5H972.5M971.0 136.3L989.5 127.5H1206.5" fill="none" stroke="#009400" stroke-width="1"/>
<path d="M970.5 125.5l4 4m0 -4l-4 4" stroke="#009400" stroke-width="0.8" fill="none"/>
<text x="940.0" y="122.5" font-size="10.6" fill="#c8c8c8" font-family='"Liberation Sans", sans-serif' textLength="53.5" lengthAdjust="spacingAndGlyphs">BM65N-32C16/1P</text>
<text x="1048.0" y="122.5" font-size="10.6" fill="#c8c8c8" font-family='"Liberation Sans", sans-serif' textLength="11.3" lengthAdjust="spacingAndGlyphs">WL1</text>
<text x="1070.9" y="122.5" font-size="10.6" fill="#c8c8c8" font-family='"Liberation Sans", sans-serif' textLength="81.5" lengthAdjust="spacingAndGlyphs">ZRBV-3X2.5-SC15-CC/WC</text>
<text x="1218.0" y="122.0" font-size="10.2" fill="#dcdcdc" font-family='"Liberation Sans", "Noto Sans CJK SC", sans-serif' textLength="17.2" lengthAdjust="spacingAndGlyphs">应急照明</text>
<path d="M928.5 153.5H972.5M971.0 162.3L989.5 153.5H1206.5" fill="none" stroke="#009400" stroke-width="1"/>
<path d="M970.5 151.5l4 4m0 -4l-4 4" stroke="#009400" stroke-width="0.8" fill="none"/>
<text x="940.0" y="148.5" font-size="10.6" fill="#c8c8c8" font-family='"Liberation Sans", sans-serif' textLength="53.5" lengthAdjust="spacingAndGlyphs">BM65N-32C16/1P</text>
<text x="1048.0" y="148.5" font-size="10.6" fill="#c8c8c8" font-family='"Liberation Sans", sans-serif' textLength="11.3" lengthAdjust="spacingAndGlyphs">WL2</text>
<text x="1070.9" y="148.5" font-size="10.6" fill="#c8c8c8" font-family='"Liberation Sans", sans-serif' textLength="73.5" lengthAdjust="spacingAndGlyphs">BV-3X2.5-PC16-CC/WC</text>
<text x="1218.0" y="148.0" font-size="10.2" fill="#dcdcdc" font-family='"Liberation Sans", "Noto Sans CJK SC", sans-serif' textLength="8.6" lengthAdjust="spacingAndGlyphs">照明</text>
<path d="M928.5 179.5H972.5M971.0 188.3L989.5 179.5H1206.5" fill="none" stroke="#009400" stroke-width="1"/>
<path d="M970.5 177.5l4 4m0 -4l-4 4" stroke="#009400" stroke-width="0.8" fill="none"/>
<text x="940.0" y="174.5" font-size="10.6" fill="#c8c8c8" font-family='"Liberation Sans", sans-serif' textLength="53.5" lengthAdjust="spacingAndGlyphs">BM65N-32C16/1P</text>
<text x="1048.0" y="174.5" font-size="10.6" fill="#c8c8c8" font-family='"Liberation Sans", sans-serif' textLength="11.3" lengthAdjust="spacingAndGlyphs">WL3</text>
<text x="1070.9" y="174.5" font-size="10.6" fill="#c8c8c8" font-family='"Liberation Sans", sans-serif' textLength="73.5" lengthAdjust="spacingAndGlyphs">BV-3X2.5-PC16-CC/WC</text>
<text x="1218.0" y="174.0" font-size="10.2" fill="#dcdcdc" font-family='"Liberation Sans", "Noto Sans CJK SC", sans-serif' textLength="8.6" lengthAdjust="spacingAndGlyphs">照明</text>
<path d="M928.5 205.5H972.5M971.0 214.3L989.5 205.5H1206.5" fill="none" stroke="#009400" stroke-width="1"/>
<path d="M970.5 203.5l4 4m0 -4l-4 4" stroke="#009400" stroke-width="0.8" fill="none"/>
<text x="940.0" y="200.5" font-size="10.6" fill="#c8c8c8" font-family='"Liberation Sans", sans-serif' textLength="53.5" lengthAdjust="spacingAndGlyphs">BM65N-32C16/1P</text>
<text x="1048.0" y="200.5" font-size="10.6" fill="#c8c8c8" font-family='"Liberation Sans", sans-serif' textLength="11.3" lengthAdjust="spacingAndGlyphs">WL4</text>
<text x="1070.9" y="200.5" font-size="10.6" fill="#c8c8c8" font-family='"Liberation Sans", sans-serif' textLength="73.5" lengthAdjust="spacingAndGlyphs">BV-3X2.5-PC16-CC/WC</text>
<text x="1218.0" y="200.0" font-size="10.2" fill="#dcdcdc" font-family='"Liberation Sans", "Noto Sans CJK SC", sans-serif' textLength="8.6" lengthAdjust="spacingAndGlyphs">照明</text>
<path d="M928.5 231.5H972.5M971.0 240.3L989.5 231.5H1206.5" fill="none" stroke="#009400" stroke-width="1"/>
<path d="M970.5 229.5l4 4m0 -4l-4 4" stroke="#009400" stroke-width="0.8" fill="none"/>
<text x="940.0" y="226.5" font-size="10.6" fill="#c8c8c8" font-family='"Liberation Sans", sans-serif' textLength="53.5" lengthAdjust="spacingAndGlyphs">BM65N-32C16/1P</text>
<text x="1048.0" y="226.5" font-size="10.6" fill="#c8c8c8" font-family='"Liberation Sans", sans-serif' textLength="11.3" lengthAdjust="spacingAndGlyphs">WL5</text>
<text x="1070.9" y="226.5" font-size="10.6" fill="#c8c8c8" font-family='"Liberation Sans", sans-serif' textLength="73.5" lengthAdjust="spacingAndGlyphs">BV-3X2.5-PC16-CC/WC</text>
<text x="1218.0" y="226.0" font-size="10.2" fill="#dcdcdc" font-family='"Liberation Sans", "Noto Sans CJK SC", sans-serif' textLength="8.6" lengthAdjust="spacingAndGlyphs">照明</text>
<path d="M928.5 257.5H972.5M971.0 266.3L989.5 257.5H1206.5" fill="none" stroke="#009400" stroke-width="1"/>
<path d="M970.5 255.5l4 4m0 -4l-4 4" stroke="#009400" stroke-width="0.8" fill="none"/>
<text x="940.0" y="252.5" font-size="10.6" fill="#c8c8c8" font-family='"Liberation Sans", sans-serif' textLength="53.5" lengthAdjust="spacingAndGlyphs">BM65N-32C16/1P</text>
<text x="1048.0" y="252.5" font-size="10.6" fill="#c8c8c8" font-family='"Liberation Sans", sans-serif' textLength="11.3" lengthAdjust="spacingAndGlyphs">WL6</text>
<text x="1070.9" y="252.5" font-size="10.6" fill="#c8c8c8" font-family='"Liberation Sans", sans-serif' textLength="73.5" lengthAdjust="spacingAndGlyphs">BV-3X2.5-PC16-CC/WC</text>
<text x="1218.0" y="252.0" font-size="10.2" fill="#dcdcdc" font-family='"Liberation Sans", "Noto Sans CJK SC", sans-serif' textLength="8.6" lengthAdjust="spacingAndGlyphs">照明</text>
<path d="M928.5 283.5H972.5M971.0 292.3L989.5 283.5H1206.5" fill="none" stroke="#009400" stroke-width="1"/>
<path d="M970.5 281.5l4 4m0 -4l-4 4" stroke="#009400" stroke-width="0.8" fill="none"/>
<text x="940.0" y="278.5" font-size="10.6" fill="#c8c8c8" font-family='"Liberation Sans", sans-serif' textLength="53.5" lengthAdjust="spacingAndGlyphs">BM65N-32C16/1P</text>
<text x="1048.0" y="278.5" font-size="10.6" fill="#c8c8c8" font-family='"Liberation Sans", sans-serif' textLength="11.3" lengthAdjust="spacingAndGlyphs">WL7</text>
<text x="1070.9" y="278.5" font-size="10.6" fill="#c8c8c8" font-family='"Liberation Sans", sans-serif' textLength="73.5" lengthAdjust="spacingAndGlyphs">BV-3X2.5-PC16-CC/WC</text>
<text x="1218.0" y="278.0" font-size="10.2" fill="#dcdcdc" font-family='"Liberation Sans", "Noto Sans CJK SC", sans-serif' textLength="8.6" lengthAdjust="spacingAndGlyphs">照明</text>
<path d="M928.5 309.5H972.5M971.0 318.3L989.5 309.5H1206.5" fill="none" stroke="#009400" stroke-width="1"/>
<path d="M970.5 307.5l4 4m0 -4l-4 4" stroke="#009400" stroke-width="0.8" fill="none"/>
<ellipse cx="982.6" cy="312.8" rx="3.6" ry="1.9" fill="none" stroke="#009400" stroke-width="0.65" transform="rotate(-22 982.6 312.8)"/>
<text x="940.0" y="304.5" font-size="10.6" fill="#c8c8c8" font-family='"Liberation Sans", sans-serif' textLength="62.3" lengthAdjust="spacingAndGlyphs">BM65NL-32C20/1PN</text>
<text x="1048.0" y="304.5" font-size="10.6" fill="#c8c8c8" font-family='"Liberation Sans", sans-serif' textLength="11.3" lengthAdjust="spacingAndGlyphs">WX1</text>
<text x="1070.9" y="304.5" font-size="10.6" fill="#c8c8c8" font-family='"Liberation Sans", sans-serif' textLength="93.5" lengthAdjust="spacingAndGlyphs">BV-3X4.0-PC20-CC/WC-30mA</text>
<text x="1218.0" y="304.0" font-size="10.2" fill="#dcdcdc" font-family='"Liberation Sans", "Noto Sans CJK SC", sans-serif' textLength="8.6" lengthAdjust="spacingAndGlyphs">插座</text>
<path d="M928.5 335.5H972.5M971.0 344.3L989.5 335.5H1206.5" fill="none" stroke="#009400" stroke-width="1"/>
<path d="M970.5 333.5l4 4m0 -4l-4 4" stroke="#009400" stroke-width="0.8" fill="none"/>
<ellipse cx="982.6" cy="338.8" rx="3.6" ry="1.9" fill="none" stroke="#009400" stroke-width="0.65" transform="rotate(-22 982.6 338.8)"/>
<text x="940.0" y="330.5" font-size="10.6" fill="#c8c8c8" font-family='"Liberation Sans", sans-serif' textLength="62.3" lengthAdjust="spacingAndGlyphs">BM65NL-32C20/1PN</text>
<text x="1048.0" y="330.5" font-size="10.6" fill="#c8c8c8" font-family='"Liberation Sans", sans-serif' textLength="11.3" lengthAdjust="spacingAndGlyphs">WX2</text>
<text x="1070.9" y="330.5" font-size="10.6" fill="#c8c8c8" font-family='"Liberation Sans", sans-serif' textLength="93.5" lengthAdjust="spacingAndGlyphs">BV-3X4.0-PC20-CC/WC-30mA</text>
<text x="1218.0" y="330.0" font-size="10.2" fill="#dcdcdc" font-family='"Liberation Sans", "Noto Sans CJK SC", sans-serif' textLength="8.6" lengthAdjust="spacingAndGlyphs">插座</text>
<path d="M928.5 361.5H972.5M971.0 370.3L989.5 361.5H1206.5" fill="none" stroke="#009400" stroke-width="1"/>
<path d="M970.5 359.5l4 4m0 -4l-4 4" stroke="#009400" stroke-width="0.8" fill="none"/>
<ellipse cx="982.6" cy="364.8" rx="3.6" ry="1.9" fill="none" stroke="#009400" stroke-width="0.65" transform="rotate(-22 982.6 364.8)"/>
<text x="940.0" y="356.5" font-size="10.6" fill="#c8c8c8" font-family='"Liberation Sans", sans-serif' textLength="62.3" lengthAdjust="spacingAndGlyphs">BM65NL-32C20/1PN</text>
<text x="1048.0" y="356.5" font-size="10.6" fill="#c8c8c8" font-family='"Liberation Sans", sans-serif' textLength="11.3" lengthAdjust="spacingAndGlyphs">WX3</text>
<text x="1070.9" y="356.5" font-size="10.6" fill="#c8c8c8" font-family='"Liberation Sans", sans-serif' textLength="93.5" lengthAdjust="spacingAndGlyphs">BV-3X4.0-PC20-CC/WC-30mA</text>
<text x="1218.0" y="356.0" font-size="10.2" fill="#dcdcdc" font-family='"Liberation Sans", "Noto Sans CJK SC", sans-serif' textLength="8.6" lengthAdjust="spacingAndGlyphs">插座</text>
<path d="M928.5 387.5H972.5M971.0 396.3L989.5 387.5H1206.5" fill="none" stroke="#009400" stroke-width="1"/>
<path d="M970.5 385.5l4 4m0 -4l-4 4" stroke="#009400" stroke-width="0.8" fill="none"/>
<ellipse cx="982.6" cy="390.8" rx="3.6" ry="1.9" fill="none" stroke="#009400" stroke-width="0.65" transform="rotate(-22 982.6 390.8)"/>
<text x="940.0" y="382.5" font-size="10.6" fill="#c8c8c8" font-family='"Liberation Sans", sans-serif' textLength="62.3" lengthAdjust="spacingAndGlyphs">BM65NL-32C20/1PN</text>
<text x="1048.0" y="382.5" font-size="10.6" fill="#c8c8c8" font-family='"Liberation Sans", sans-serif' textLength="11.3" lengthAdjust="spacingAndGlyphs">WX4</text>
<text x="1070.9" y="382.5" font-size="10.6" fill="#c8c8c8" font-family='"Liberation Sans", sans-serif' textLength="93.5" lengthAdjust="spacingAndGlyphs">BV-3X4.0-PC20-CC/WC-30mA</text>
<text x="1218.0" y="382.0" font-size="10.2" fill="#dcdcdc" font-family='"Liberation Sans", "Noto Sans CJK SC", sans-serif' textLength="8.6" lengthAdjust="spacingAndGlyphs">插座</text>
<path d="M928.5 413.5H972.5M971.0 422.3L989.5 413.5H1206.5" fill="none" stroke="#009400" stroke-width="1"/>
<path d="M970.5 411.5l4 4m0 -4l-4 4" stroke="#009400" stroke-width="0.8" fill="none"/>
<ellipse cx="982.6" cy="416.8" rx="3.6" ry="1.9" fill="none" stroke="#009400" stroke-width="0.65" transform="rotate(-22 982.6 416.8)"/>
<text x="940.0" y="408.5" font-size="10.6" fill="#c8c8c8" font-family='"Liberation Sans", sans-serif' textLength="62.3" lengthAdjust="spacingAndGlyphs">BM65NL-32C20/1PN</text>
<text x="1048.0" y="408.5" font-size="10.6" fill="#c8c8c8" font-family='"Liberation Sans", sans-serif' textLength="11.3" lengthAdjust="spacingAndGlyphs">WX5</text>
<text x="1070.9" y="408.5" font-size="10.6" fill="#c8c8c8" font-family='"Liberation Sans", sans-serif' textLength="93.5" lengthAdjust="spacingAndGlyphs">BV-3X4.0-PC20-CC/WC-30mA</text>
<text x="1218.0" y="408.0" font-size="10.2" fill="#dcdcdc" font-family='"Liberation Sans", "Noto Sans CJK SC", sans-serif' textLength="8.6" lengthAdjust="spacingAndGlyphs">插座</text>
<path d="M928.5 439.5H972.5M971.0 448.3L989.5 439.5H1206.5" fill="none" stroke="#009400" stroke-width="1"/>
<path d="M970.5 437.5l4 4m0 -4l-4 4" stroke="#009400" stroke-width="0.8" fill="none"/>
<ellipse cx="982.6" cy="442.8" rx="3.6" ry="1.9" fill="none" stroke="#009400" stroke-width="0.65" transform="rotate(-22 982.6 442.8)"/>
<text x="940.0" y="434.5" font-size="10.6" fill="#c8c8c8" font-family='"Liberation Sans", sans-serif' textLength="62.3" lengthAdjust="spacingAndGlyphs">BM65NL-32C20/1PN</text>
<text x="1048.0" y="434.5" font-size="10.6" fill="#c8c8c8" font-family='"Liberation Sans", sans-serif' textLength="11.3" lengthAdjust="spacingAndGlyphs">WX6</text>
<text x="1070.9" y="434.5" font-size="10.6" fill="#c8c8c8" font-family='"Liberation Sans", sans-serif' textLength="93.5" lengthAdjust="spacingAndGlyphs">BV-3X4.0-PC20-CC/WC-30mA</text>
<text x="1218.0" y="434.0" font-size="10.2" fill="#dcdcdc" font-family='"Liberation Sans", "Noto Sans CJK SC", sans-serif' textLength="8.6" lengthAdjust="spacingAndGlyphs">插座</text>
<path d="M928.5 465.5H972.5M971.0 474.3L989.5 465.5H1206.5" fill="none" stroke="#009400" stroke-width="1"/>
<path d="M970.5 463.5l4 4m0 -4l-4 4" stroke="#009400" stroke-width="0.8" fill="none"/>
<ellipse cx="982.6" cy="468.8" rx="3.6" ry="1.9" fill="none" stroke="#009400" stroke-width="0.65" transform="rotate(-22 982.6 468.8)"/>
<text x="940.0" y="460.5" font-size="10.6" fill="#c8c8c8" font-family='"Liberation Sans", sans-serif' textLength="62.3" lengthAdjust="spacingAndGlyphs">BM65NL-32C20/1PN</text>
<text x="1048.0" y="460.5" font-size="10.6" fill="#c8c8c8" font-family='"Liberation Sans", sans-serif' textLength="11.3" lengthAdjust="spacingAndGlyphs">WX7</text>
<text x="1070.9" y="460.5" font-size="10.6" fill="#c8c8c8" font-family='"Liberation Sans", sans-serif' textLength="93.5" lengthAdjust="spacingAndGlyphs">BV-3X4.0-PC20-CC/WC-30mA</text>
<text x="1218.0" y="460.0" font-size="10.2" fill="#dcdcdc" font-family='"Liberation Sans", "Noto Sans CJK SC", sans-serif' textLength="8.6" lengthAdjust="spacingAndGlyphs">插座</text>
<path d="M928.5 491.5H972.5M971.0 500.3L989.5 491.5H1206.5" fill="none" stroke="#009400" stroke-width="1"/>
<path d="M970.5 489.5l4 4m0 -4l-4 4" stroke="#009400" stroke-width="0.8" fill="none"/>
<ellipse cx="982.6" cy="494.8" rx="3.6" ry="1.9" fill="none" stroke="#009400" stroke-width="0.65" transform="rotate(-22 982.6 494.8)"/>
<text x="940.0" y="486.5" font-size="10.6" fill="#c8c8c8" font-family='"Liberation Sans", sans-serif' textLength="62.3" lengthAdjust="spacingAndGlyphs">BM65NL-32C20/1PN</text>
<text x="1048.0" y="486.5" font-size="10.6" fill="#c8c8c8" font-family='"Liberation Sans", sans-serif' textLength="11.3" lengthAdjust="spacingAndGlyphs">WX8</text>
<text x="1070.9" y="486.5" font-size="10.6" fill="#c8c8c8" font-family='"Liberation Sans", sans-serif' textLength="93.5" lengthAdjust="spacingAndGlyphs">BV-3X4.0-PC20-CC/WC-30mA</text>
<text x="1218.0" y="486.0" font-size="10.2" fill="#dcdcdc" font-family='"Liberation Sans", "Noto Sans CJK SC", sans-serif' textLength="8.6" lengthAdjust="spacingAndGlyphs">插座</text>
<path d="M928.5 517.5H972.5M971.0 526.3L989.5 517.5H1206.5" fill="none" stroke="#009400" stroke-width="1"/>
<path d="M970.5 515.5l4 4m0 -4l-4 4" stroke="#009400" stroke-width="0.8" fill="none"/>
<ellipse cx="982.6" cy="520.8" rx="3.6" ry="1.9" fill="none" stroke="#009400" stroke-width="0.65" transform="rotate(-22 982.6 520.8)"/>
<text x="940.0" y="512.5" font-size="10.6" fill="#c8c8c8" font-family='"Liberation Sans", sans-serif' textLength="62.3" lengthAdjust="spacingAndGlyphs">BM65NL-32C20/1PN</text>
<text x="1048.0" y="512.5" font-size="10.6" fill="#c8c8c8" font-family='"Liberation Sans", sans-serif' textLength="11.3" lengthAdjust="spacingAndGlyphs">WX9</text>
<text x="1070.9" y="512.5" font-size="10.6" fill="#c8c8c8" font-family='"Liberation Sans", sans-serif' textLength="93.5" lengthAdjust="spacingAndGlyphs">BV-3X4.0-PC20-CC/WC-30mA</text>
<text x="1218.0" y="512.0" font-size="10.2" fill="#dcdcdc" font-family='"Liberation Sans", "Noto Sans CJK SC", sans-serif' textLength="8.6" lengthAdjust="spacingAndGlyphs">插座</text>
<path d="M928.5 543.5H972.5M971.0 552.3L989.5 543.5H1206.5" fill="none" stroke="#009400" stroke-width="1"/>
<path d="M970.5 541.5l4 4m0 -4l-4 4" stroke="#009400" stroke-width="0.8" fill="none"/>
<ellipse cx="982.6" cy="546.8" rx="3.6" ry="1.9" fill="none" stroke="#009400" stroke-width="0.65" transform="rotate(-22 982.6 546.8)"/>
<text x="940.0" y="538.5" font-size="10.6" fill="#c8c8c8" font-family='"Liberation Sans", sans-serif' textLength="62.3" lengthAdjust="spacingAndGlyphs">BM65NL-32C20/1PN</text>
<text x="1048.0" y="538.5" font-size="10.6" fill="#c8c8c8" font-family='"Liberation Sans", sans-serif' textLength="14.3" lengthAdjust="spacingAndGlyphs">WX10</text>
<text x="1070.9" y="538.5" font-size="10.6" fill="#c8c8c8" font-family='"Liberation Sans", sans-serif' textLength="93.5" lengthAdjust="spacingAndGlyphs">BV-3X4.0-PC20-CC/WC-30mA</text>
<text x="1218.0" y="538.0" font-size="10.2" fill="#dcdcdc" font-family='"Liberation Sans", "Noto Sans CJK SC", sans-serif' textLength="8.6" lengthAdjust="spacingAndGlyphs">插座</text>
<path d="M928.5 569.5H972.5M971.0 578.3L989.5 569.5H1206.5" fill="none" stroke="#009400" stroke-width="1"/>
<path d="M970.5 567.5l4 4m0 -4l-4 4" stroke="#009400" stroke-width="0.8" fill="none"/>
<ellipse cx="982.6" cy="572.8" rx="3.6" ry="1.9" fill="none" stroke="#009400" stroke-width="0.65" transform="rotate(-22 982.6 572.8)"/>
<text x="940.0" y="564.5" font-size="10.6" fill="#c8c8c8" font-family='"Liberation Sans", sans-serif' textLength="62.3" lengthAdjust="spacingAndGlyphs">BM65NL-32C20/1PN</text>
<text x="1048.0" y="564.5" font-size="10.6" fill="#c8c8c8" font-family='"Liberation Sans", sans-serif' textLength="14.3" lengthAdjust="spacingAndGlyphs">WX11</text>
<text x="1070.9" y="564.5" font-size="10.6" fill="#c8c8c8" font-family='"Liberation Sans", sans-serif' textLength="93.5" lengthAdjust="spacingAndGlyphs">BV-3X4.0-PC20-CC/WC-30mA</text>
<text x="1218.0" y="564.0" font-size="10.2" fill="#dcdcdc" font-family='"Liberation Sans", "Noto Sans CJK SC", sans-serif' textLength="8.6" lengthAdjust="spacingAndGlyphs">插座</text>
<path d="M928.5 595.5H972.5M971.0 604.3L989.5 595.5H1206.5" fill="none" stroke="#009400" stroke-width="1"/>
<path d="M970.5 593.5l4 4m0 -4l-4 4" stroke="#009400" stroke-width="0.8" fill="none"/>
<ellipse cx="982.6" cy="598.8" rx="3.6" ry="1.9" fill="none" stroke="#009400" stroke-width="0.65" transform="rotate(-22 982.6 598.8)"/>
<text x="940.0" y="590.5" font-size="10.6" fill="#c8c8c8" font-family='"Liberation Sans", sans-serif' textLength="62.3" lengthAdjust="spacingAndGlyphs">BM65NL-32C20/1PN</text>
<text x="1048.0" y="590.5" font-size="10.6" fill="#c8c8c8" font-family='"Liberation Sans", sans-serif' textLength="14.3" lengthAdjust="spacingAndGlyphs">WX12</text>
<text x="1070.9" y="590.5" font-size="10.6" fill="#c8c8c8" font-family='"Liberation Sans", sans-serif' textLength="93.5" lengthAdjust="spacingAndGlyphs">BV-3X4.0-PC20-CC/WC-30mA</text>
<text x="1218.0" y="590.0" font-size="10.2" fill="#dcdcdc" font-family='"Liberation Sans", "Noto Sans CJK SC", sans-serif' textLength="8.6" lengthAdjust="spacingAndGlyphs">插座</text>
<path d="M928.5 621.5H972.5M971.0 630.3L989.5 621.5H1206.5" fill="none" stroke="#009400" stroke-width="1"/>
<path d="M970.5 619.5l4 4m0 -4l-4 4" stroke="#009400" stroke-width="0.8" fill="none"/>
<ellipse cx="982.6" cy="624.8" rx="3.6" ry="1.9" fill="none" stroke="#009400" stroke-width="0.65" transform="rotate(-22 982.6 624.8)"/>
<text x="940.0" y="616.5" font-size="10.6" fill="#c8c8c8" font-family='"Liberation Sans", sans-serif' textLength="62.3" lengthAdjust="spacingAndGlyphs">BM65NL-32C20/1PN</text>
<text x="1047.0" y="615.3" font-size="10.6" fill="#c8c8c8" font-family='"Liberation Sans", sans-serif' textLength="2.5" lengthAdjust="spacingAndGlyphs">-</text>
<text x="1070.9" y="616.5" font-size="10.6" fill="#c8c8c8" font-family='"Liberation Sans", sans-serif' textLength="93.5" lengthAdjust="spacingAndGlyphs">BV-3X4.0-PC20-CC/WC-30mA</text>
<text x="1218.0" y="616.0" font-size="10.2" fill="#dcdcdc" font-family='"Liberation Sans", "Noto Sans CJK SC", sans-serif' textLength="8.6" lengthAdjust="spacingAndGlyphs">弱电</text>
<path d="M928.5 647.5H972.5M971.0 656.3L989.5 647.5H1206.5" fill="none" stroke="#009400" stroke-width="1"/>
<path d="M970.5 645.5l4 4m0 -4l-4 4" stroke="#009400" stroke-width="0.8" fill="none"/>
<ellipse cx="982.6" cy="650.8" rx="3.6" ry="1.9" fill="none" stroke="#009400" stroke-width="0.65" transform="rotate(-22 982.6 650.8)"/>
<text x="940.0" y="642.5" font-size="10.6" fill="#c8c8c8" font-family='"Liberation Sans", sans-serif' textLength="62.3" lengthAdjust="spacingAndGlyphs">BM65NL-32C20/1PN</text>
<text x="1047.0" y="641.3" font-size="10.6" fill="#c8c8c8" font-family='"Liberation Sans", sans-serif' textLength="2.5" lengthAdjust="spacingAndGlyphs">-</text>
<text x="1070.9" y="642.5" font-size="10.6" fill="#c8c8c8" font-family='"Liberation Sans", sans-serif' textLength="93.5" lengthAdjust="spacingAndGlyphs">BV-3X4.0-PC20-CC/WC-30mA</text>
<text x="1218.0" y="642.0" font-size="10.2" fill="#dcdcdc" font-family='"Liberation Sans", "Noto Sans CJK SC", sans-serif' textLength="8.6" lengthAdjust="spacingAndGlyphs">备用</text>
<text x="702.0" y="375.2" font-size="10.6" fill="#c8c8c8" font-family='"Liberation Sans", sans-serif' textLength="75.5" lengthAdjust="spacingAndGlyphs">YJV-4X35+16-SC40-WC</text>
<path d="M694.0 380H834.5M833.5 389L853.0 380H928.5" fill="none" stroke="#009400" stroke-width="1"/>
<path d="M832.5 378l4 4m0 -4l-4 4" stroke="#009400" stroke-width="0.8" fill="none"/>
<text x="845.5" y="375.8" font-size="10.6" fill="#c8c8c8" font-family='"Liberation Sans", sans-serif' textLength="51.5" lengthAdjust="spacingAndGlyphs">BM65-63C50/3P</text>
<text x="854.0" y="402.0" font-size="10.3" fill="#c8c8c8" font-family='"Liberation Sans", sans-serif' textLength="31.0" lengthAdjust="spacingAndGlyphs">Pe=20KW</text>
<text x="859.0" y="413.5" font-size="10.3" fill="#c8c8c8" font-family='"Liberation Sans", sans-serif' textLength="22.5" lengthAdjust="spacingAndGlyphs">Kx=0.9</text>
<text x="859.0" y="429.0" font-size="10.3" fill="#c8c8c8" font-family='"Liberation Sans", sans-serif' textLength="30.0" lengthAdjust="spacingAndGlyphs">Ijs=32.2A</text>
<text x="859.0" y="444.5" font-size="10.3" fill="#c8c8c8" font-family='"Liberation Sans", sans-serif' textLength="31.0" lengthAdjust="spacingAndGlyphs">Pjs=18KW</text>
<text x="912.0" y="677.3" font-size="10.6" fill="#c8c8c8" font-family='"Liberation Sans", sans-serif' textLength="13.5" lengthAdjust="spacingAndGlyphs">2AL1</text>
<line x1="898.0" y1="679.5" x2="949.0" y2="679.5" stroke="#008600" stroke-width="1"/>
<text x="897.7" y="693.3" font-size="10" fill="#c8c8c8" font-family='"Liberation Sans", "Noto Sans CJK SC", sans-serif' textLength="16.0" lengthAdjust="spacingAndGlyphs">箱体尺寸</text>
<text x="914.1" y="693.3" font-size="10.6" fill="#c8c8c8" font-family='"Liberation Sans", sans-serif' textLength="75.0" lengthAdjust="spacingAndGlyphs">500X600X150(wxhxd),</text>
<text x="989.7" y="693.3" font-size="10" fill="#c8c8c8" font-family='"Liberation Sans", "Noto Sans CJK SC", sans-serif' textLength="10.2" lengthAdjust="spacingAndGlyphs">距地</text>
<text x="1000.5" y="693.3" font-size="10.6" fill="#c8c8c8" font-family='"Liberation Sans", sans-serif' textLength="13.6" lengthAdjust="spacingAndGlyphs">1.8m</text>
<text x="1014.6" y="693.3" font-size="10" fill="#c8c8c8" font-family='"Liberation Sans", "Noto Sans CJK SC", sans-serif' textLength="11.2" lengthAdjust="spacingAndGlyphs">暗装。</text>
<text x="606.0" y="717.5" font-size="21" fill="#b4b4b4" font-family='"Liberation Sans", "Noto Sans CJK SC", sans-serif' textLength="106.0" lengthAdjust="spacingAndGlyphs" font-weight="300">配电箱系统图</text>
<text x="716.2" y="717.5" font-size="27" fill="#a8a8a8" font-family='"Liberation Sans", sans-serif'>(</text>
<text x="747.4" y="717.5" font-size="27" fill="#a8a8a8" font-family='"Liberation Sans", sans-serif'>)</text>
<line x1="605" y1="719.5" x2="855" y2="719.5" stroke="#009400" stroke-width="1"/>
<text x="817.0" y="716.5" font-size="14" fill="#b0b0b0" font-family='"Liberation Sans", sans-serif' textLength="29.0" lengthAdjust="spacingAndGlyphs">1:100</text>
<path d="M1025.5 722V702.5H1269M1074.5 702.5V722M1125.5 702.5V722M1179.5 702.5V722" fill="none" stroke="#b4b4b4" stroke-width="1"/>
<text x="1046.0" y="717.5" font-size="9" fill="#c8c8c8" font-family='"Liberation Sans", "Noto Sans CJK SC", sans-serif' textLength="11.0" lengthAdjust="spacingAndGlyphs">日期</text>
<text x="1078.0" y="717.5" font-size="11" fill="#c8c8c8" font-family='"Liberation Sans", sans-serif' textLength="28.0" lengthAdjust="spacingAndGlyphs">2014.07</text>
<text x="1140.0" y="727.0" font-size="9" fill="#c8c8c8" font-family='"Liberation Sans", "Noto Sans CJK SC", sans-serif' textLength="28.0" lengthAdjust="spacingAndGlyphs">工程名称</text>
<text x="1183.0" y="727.0" font-size="9" fill="#c8c8c8" font-family='"Liberation Sans", "Noto Sans CJK SC", sans-serif' textLength="28.0" lengthAdjust="spacingAndGlyphs">专用宿舍楼</text>
</svg>
<div id="panel">
<div class="hd">测量</div><div class="cl">×</div>
<div class="prow first" style="top:19.70px"><span class="pi"><svg width="14" height="14" viewBox="0 0 14 14"><g fill="none" stroke="#20a4f2" stroke-width="1" stroke-linecap="round" stroke-linejoin="round"><path d="M2.600 3.800l8 6.400M1.800 5l1.600-2.400M10 11.400l1.600-2.400"/><path d="M2.600 3.800l2.600.6l-1.300 1.600zM10.600 10.200l-2.600-.6l1.300-1.600z" fill="#20a4f2" stroke="none"/></g></svg></span><span>对齐</span></div>
<div class="prow" style="top:39.58px"><span class="pi"><svg width="14" height="14" viewBox="0 0 14 14"><g fill="none" stroke="#20a4f2" stroke-width="1" stroke-linecap="round" stroke-linejoin="round"><path d="M1.500 4.400v5.200M12.500 4.400v5.200M2.400 7h9.200"/><path d="M2 7l2.600-1.500v3zM12 7l-2.600-1.500v3z" fill="#20a4f2" stroke="none"/></g></svg></span><span>线性</span></div>
<div class="prow" style="top:59.45px"><span class="pi"><svg width="14" height="14" viewBox="0 0 14 14"><g fill="none" stroke="#20a4f2" stroke-width="1" stroke-linecap="round" stroke-linejoin="round"><path d="M2.200 2.200l9.800 3.600v3.400H2.200z" fill="#bfe0fa"/><path d="M2.200 10.400v2.400M12 10.400v2.400M3 11.800h8.200" stroke-width=".9"/></g></svg></span><span>面积</span></div>
<div class="prow" style="top:79.33px"><span class="pi"><svg width="14" height="14" viewBox="0 0 14 14"><g fill="none" stroke="#20a4f2" stroke-width="1" stroke-linecap="round" stroke-linejoin="round"><rect x="1.800" y="1.600" width="10.400" height="7" fill="#9fd0f6"/><path d="M1.800 10v3M12.200 10v3M2.600 11.600h8.800" stroke-width=".9"/></g></svg></span><span>矩形面积</span></div>
<div class="prow" style="top:99.20px"><span class="pi"><svg width="14" height="14" viewBox="0 0 14 14"><g fill="none" stroke="#20a4f2" stroke-width="1" stroke-linecap="round" stroke-linejoin="round"><path d="M2.600 11.400V9.600l2.400-4h2"/><rect x="1.200" y="10.600" width="2.800" height="2.600" stroke-width=".8"/><path d="M8 3h5M8 6h5M5.600 2.200l1.400 1.600M7 2.200L5.600 3.800M5.800 5.200l.7.800l.7-.8M6.500 6v1" stroke-width=".8"/></g></svg></span><span>坐标标注</span></div>
<div class="prow" style="top:119.08px"><span class="pi"><svg width="14" height="14" viewBox="0 0 14 14"><text x="7" y="6.200" text-anchor="middle" font-family='"Liberation Mono", monospace' font-weight="bold" font-size="6.600" fill="#20a4f2" textLength="12" lengthAdjust="spacingAndGlyphs">A:B</text><rect x="1" y="8.200" width="12" height="3.600" fill="#cfe8fb" stroke="#20a4f2" stroke-width=".9"/></svg></span><span>设置标注比例</span></div>
<div class="prow" style="top:138.95px"><span class="pi"><svg width="14" height="14" viewBox="0 0 14 14"><g fill="none" stroke="#c9a25a" stroke-width="1" stroke-linecap="round" stroke-linejoin="round"><path d="M2.600 12V9A6.400 6.400 0 0 1 9 2.600h3" stroke-width="1.300"/><path d="M6 12V9.600A3.600 3.600 0 0 1 9.600 6H12"/></g></svg></span><span>弧长</span></div>
<div class="prow" style="top:158.82px"><span class="pi"><svg width="14" height="14" viewBox="0 0 14 14"><g fill="none" stroke="#c9a25a" stroke-width="1" stroke-linecap="round" stroke-linejoin="round"><path d="M1.600 3.200l5 4.400M12.600 2.800L4 12.400" stroke-width="1.200"/><circle cx="1.800" cy="3.200" r="1" /></g></svg></span><span>点到直线的距离</span></div>
<div class="prow" style="top:178.70px"><span class="pi"><svg width="14" height="14" viewBox="0 0 14 14"><g fill="none" stroke="#c9a25a" stroke-width="1" stroke-linecap="round" stroke-linejoin="round"><path d="M5 2.200C2.600 4.600 2.600 8.600 5 11h5.600" stroke-width="1.300"/><circle cx="5" cy="2.200" r="1.100" fill="#c9a25a"/><circle cx="5.200" cy="11" r="1.100" fill="#c9a25a"/><circle cx="11.400" cy="11" r="1.100" fill="#c9a25a"/></g></svg></span><span>连续测量</span></div>
<div class="prow" style="top:198.57px"><span class="pi"><svg width="14" height="14" viewBox="0 0 14 14"><g fill="none" stroke="#c9a25a" stroke-width="1" stroke-linecap="round" stroke-linejoin="round"><rect x="1.600" y="1.600" width="10.800" height="10.800" stroke-dasharray="2 1.200" stroke-width="1.200"/><path d="M4 9.600V6.200h3.400V4h2.800v5.600z" stroke-width=".9"/><path d="M8.400 9l3.400 3.400" stroke-width="1.200"/></g></svg></span><span>批量测量</span></div>
<div class="prow" style="top:218.45px"><span class="pi"><svg width="14" height="14" viewBox="0 0 14 14"><g fill="none" stroke="#c9a25a" stroke-width="1" stroke-linecap="round" stroke-linejoin="round"><path d="M1.600 6.400l3.200-3.200h7v6.200l-3 3H5z"/><circle cx="8.200" cy="7.400" r="2"/><path d="M2 9.600l2 2.400" /></g></svg></span><span>查看分段长度</span></div>
<div class="prow" style="top:238.32px"><span class="pi"><svg width="14" height="14" viewBox="0 0 14 14"><g fill="none" stroke="#c9a25a" stroke-width="1" stroke-linecap="round" stroke-linejoin="round"><path d="M7 2.200l5 4.200l-5 5.600L2 7z" stroke-width="1.200"/><path d="M5 7.400l1.600 1.400L10.400 4" stroke-width="1.200"/></g></svg></span><span>修改单个标注属性</span></div>
<div class="prow" style="top:258.20px"><span class="pi"><svg width="14" height="14" viewBox="0 0 14 14"><g fill="none" stroke="#c9a25a" stroke-width="1" stroke-linecap="round" stroke-linejoin="round"><path d="M2 12.200V5.600C2 3 4 2 6.400 2h5.800v6.400c0 2.600-2 3.800-4.400 3.800z" stroke-width="1.100"/><path d="M3 10.600l7.400-7.600M5.200 11.600l6.400-6.800M2.600 7.400l4.600-4.800M8.200 11.600l3.600-3.800" stroke-width=".8"/></g></svg></span><span>面积<i>(</i>含弧线<i>)</i></span></div>
<div class="prow" style="top:278.07px"><span class="pi"><svg width="14" height="14" viewBox="0 0 14 14"><g fill="none" stroke="#c9a25a" stroke-width="1" stroke-linecap="round" stroke-linejoin="round"><path d="M1.600 7.600C1.600 4 4 2 7.600 2s5 1.600 5 4.200s-2.400 6-6.400 6s-4.600-2-4.600-4.600z" stroke-width="1.100"/><rect x="4.400" y="4.800" width="5.400" height="4.200" stroke-width="1.100"/></g></svg></span><span>测量填充面积</span></div>
<div class="prow" style="top:297.95px"><span class="pi"><svg width="14" height="14" viewBox="0 0 14 14"><g fill="none" stroke="#c9a25a" stroke-width="1" stroke-linecap="round" stroke-linejoin="round"><path d="M2 4.600l3-2.400h7v8L9.200 12.600H2zM2 4.600h7.200v8M9.200 4.600L12 2.200" stroke-width="1"/><path d="M3.400 11l4.600-5M3.200 8l2.600-2.800" stroke-width=".7"/></g></svg></span><span>计算侧面积</span></div>
<div class="prow" style="top:317.82px"><span class="pi"><svg width="14" height="14" viewBox="0 0 14 14"><g fill="none" stroke="#c9a25a" stroke-width="1" stroke-linecap="round" stroke-linejoin="round"><path d="M1.600 1.800l10.800 1.600v9H3.400z" stroke-width="1.100"/><rect x="5.200" y="5.600" width="4.800" height="4.400" stroke-width="1"/><path d="M6.400 8.800l2.400-2" stroke-width=".7"/></g></svg></span><span>面积偏移</span></div>
<div class="prow" style="top:337.70px"><span class="pi"><svg width="14" height="14" viewBox="0 0 14 14"><g fill="none" stroke="#c9a25a" stroke-width="1" stroke-linecap="round" stroke-linejoin="round"><path d="M7 1.600l5.400 5.400L7 12.400L1.600 7z" stroke-width="1.200"/><circle cx="7" cy="7" r="3"/><path d="M5 8.600l3.600-3.600M6 9.600l3.400-3.400" stroke-width=".7"/></g></svg></span><span>测量圆</span></div>
<div class="prow" style="top:357.57px"><span class="pi"><svg width="14" height="14" viewBox="0 0 14 14"><g fill="none" stroke="#c9a25a" stroke-width="1" stroke-linecap="round" stroke-linejoin="round"><circle cx="7" cy="7" r="5.400" stroke-width="1.200"/><path d="M7 7L3.800 3.400" stroke-width="1.100"/></g></svg></span><span>半径</span></div>
<div class="prow" style="top:377.45px"><span class="pi"><svg width="14" height="14" viewBox="0 0 14 14"><g fill="none" stroke="#c9a25a" stroke-width="1" stroke-linecap="round" stroke-linejoin="round"><path d="M1.800 11.400L9 3l3 8.400z" stroke-width="1.300"/><path d="M5 8c1 .6 1.600 1.800 1.600 3.200" stroke-width=".9"/></g></svg></span><span>测量角度</span></div>
<div class="prow" style="top:397.32px"><span class="pi"><svg width="14" height="14" viewBox="0 0 14 14"><g fill="none" stroke="#c9a25a" stroke-width="1" stroke-linecap="round" stroke-linejoin="round"><path d="M12 7.400V1.800H2v10.400h4.200"/><path d="M3.800 6.600l1.800-1.800l1.400 1l2.200-2.400" stroke-width=".9"/><path d="M4 9.600V8.400M6 9.600V7.600M8 9.600V8" stroke-width="1"/><path d="M7.400 10.400v2.600M12.600 10.400v2.600M8 11.700h4" stroke-width=".8"/></g></svg></span><span>测量统计</span></div>
</div>
<div id="float">
<svg class="g" width="12" height="13" viewBox="0 0 12 13"><g fill="none" stroke="#f2f2f2" stroke-width="1.100"><rect x="1" y="1.500" width="4.200" height="4.200" rx="1.200"/><rect x="6.800" y="1.500" width="4.200" height="4.200" rx="1.200"/><rect x="1" y="7.300" width="4.200" height="4.200" rx="1.200"/><rect x="6.800" y="7.300" width="4.200" height="4.200" rx="1.200"/></g></svg>
<i class="s"></i>
<span class="t">标注分类</span>
<div class="dd"><i></i><span>默认</span><b></b></div>
<svg class="fi" style="left:184px" width="15" height="15" viewBox="0 0 15 15"><g fill="none" stroke="#f2f2f2" stroke-width="1.200"><path d="M7 3H2.500v9.500H12V8"/><path d="M5.500 9.500l.600-2.400L11.600 1.600l1.800 1.800L7.900 8.900z"/><path d="M3 13.500h9.500" stroke-width="1.600"/></g></svg>
<svg class="fi" style="left:205px" width="15" height="15" viewBox="0 0 15 15"><g fill="none" stroke="#f2f2f2" stroke-width="1.200"><path d="M7.500 1.500v12M1.500 7.500h12M5.700 3.300l1.800-1.800l1.800 1.800M5.700 11.700l1.800 1.800l1.800-1.800M3.300 5.700L1.500 7.500l1.800 1.800M11.700 5.700l1.800 1.800l-1.800 1.800"/></g></svg>
<svg class="fi" style="left:226px" width="15" height="15" viewBox="0 0 15 15"><g fill="none" stroke="#f2f2f2" stroke-width="1.200"><rect x="2" y="4.500" width="8" height="9" rx="1.500"/><path d="M5 4.500V3a1.500 1.500 0 0 1 1.500-1.500H11.500A1.500 1.500 0 0 1 13 3v6.500a1.500 1.500 0 0 1-1.500 1.500H10"/></g></svg>
<svg class="fi" style="left:248px" width="15" height="15" viewBox="0 0 15 15"><g fill="none" stroke="#f2f2f2" stroke-width="1.200"><path d="M6 11.500H2.500v-9h8V6"/><path d="M4.500 2.500v-1h4v1"/><rect x="6.500" y="6.500" width="6.500" height="6.500" rx="1"/></g></svg>
</div>
<div id="btabs">
<svg width="120" height="16" viewBox="0 0 120 16" style="position:absolute;left:0;top:0"><path d="M0 0H51L46.500 14H6z" fill="#000"/><path d="M52.300 0.500H103.800L99.800 14H56.300z" fill="#fff" stroke="#333" stroke-width="0.800"/><text x="18.500" y="11" font-size="8.800" fill="#fff" font-family='"Liberation Sans","Noto Sans CJK SC",sans-serif'>模型</text><text x="61.500" y="11" font-size="8.800" fill="#111" font-family='"Liberation Sans","Noto Sans CJK SC",sans-serif'>建筑图纸</text></svg>
</div>
<div id="status">
<span class="xy">x = -196219 y = 547265</span>
<i class="vs" style="left:215px"></i><i class="vs" style="left:324px"></i>
<span class="sc">模型中的标注比例:1</span>
<i class="vs" style="left:1180px"></i><i class="vs" style="left:1202px"></i><i class="vs" style="left:1225px"></i><i class="vs" style="left:1247px"></i>
<svg class="si" style="left:1186px;top:3.200px" width="13" height="13" viewBox="0 0 13 13"><g fill="none" stroke="#c49a45" stroke-width="1.100"><path d="M1.600 11.400V3.400L3.800 1.400h6.400v7"/><path d="M1.600 11.400h6.800"/><path d="M3.600 1.600v2H1.800" stroke-width=".800"/></g><text x="6" y="7.200" font-size="4" font-weight="bold" text-anchor="middle" fill="#c49a45" font-family='"Liberation Sans",sans-serif'>PDF</text><rect x="8.600" y="8.600" width="3" height="2.600" fill="#c49a45"/></svg>
<svg class="si" style="left:1208px;top:3.200px" width="13" height="13" viewBox="0 0 13 13"><g fill="none" stroke="#d6a233" stroke-width="1.100"><path d="M1.600 4v7.600h8"/><path d="M3.400 2.600v7.200h8.200V5"/><path d="M5 8.600c.400-2 1.600-3 3.600-3M7.600 4.200l1.800 1.300l-1.500 1.700" stroke-width="1"/></g><text x="9" y="3.600" font-size="3.600" font-weight="bold" font-style="italic" text-anchor="middle" fill="#d6a233" font-family='"Liberation Sans",sans-serif'>PDF</text></svg>
<svg class="si" style="left:1230.500px;top:2.700px" width="13" height="13" viewBox="0 0 13 13"><defs><linearGradient id="pg" x1="0" y1="0" x2="1" y2="1"><stop offset="0" stop-color="#20a4ee"/><stop offset="1" stop-color="#1480d6"/></linearGradient></defs><rect x=".400" y=".400" width="12.200" height="12.200" rx="2.400" fill="url(#pg)"/><g fill="none" stroke="#fff" stroke-width=".900"><path d="M2.400 9V4.600h1.400a1.300 1.300 0 0 1 0 2.600H2.400M5.600 7.200h2"/><circle cx="9.300" cy="7.200" r="1.700"/></g></svg>
<svg class="si" style="left:1253px;top:3.200px" width="13" height="13" viewBox="0 0 13 13"><rect x="1" y="1.200" width="10.400" height="10.400" rx="1.200" fill="#f2f8fd" stroke="#86c4ee" stroke-width="1.100"/><path d="M3 8.600h6.400" stroke="#2a9de2" stroke-width="1.500"/></svg>
</div>
</div>
</body>
</html>
